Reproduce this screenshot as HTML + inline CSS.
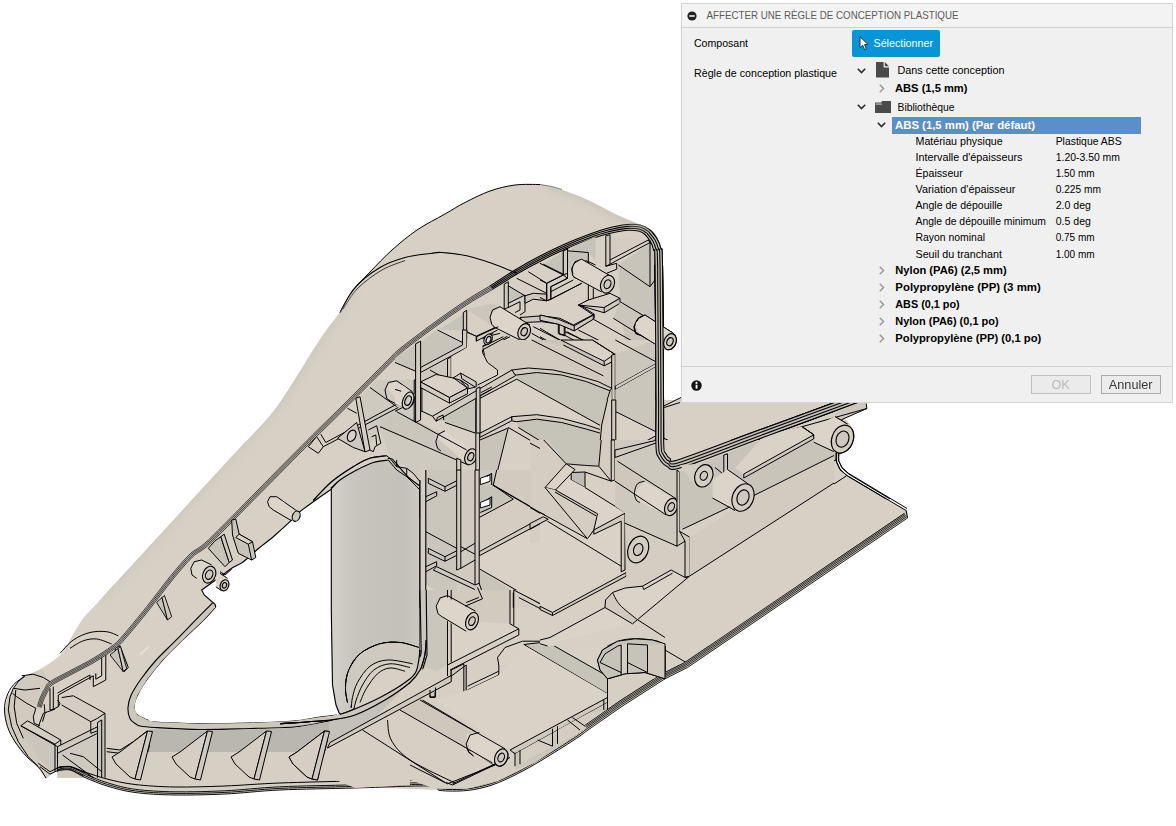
<!DOCTYPE html>
<html><head><meta charset="utf-8">
<style>
html,body{margin:0;padding:0;background:#fff;}
body{width:1176px;height:826px;overflow:hidden;position:relative;font-family:"Liberation Sans",sans-serif;font-size:11px;color:#000;}
#model{position:absolute;left:0;top:0;width:1176px;height:826px;}
#dlg{position:absolute;left:681px;top:3px;width:492px;height:400px;background:#f0f0f0;border:1px solid #d4d4d4;box-sizing:border-box;}
#ttl{position:absolute;left:0;top:0;width:490px;height:23px;border-bottom:1px solid #cfcfcf;background:#f3f3f3;}
.t{position:absolute;white-space:nowrap;line-height:14px;height:14px;font-size:11px;text-align:justify;text-align-last:justify;}
.b{font-weight:bold;}
#sel{position:absolute;left:169.5px;top:25.5px;width:88px;height:27px;background:#0696d7;border-radius:2px;}
#hl{position:absolute;left:210px;top:113px;width:249px;height:17px;background:#5b8fc9;}
#sep{position:absolute;left:0;top:362px;width:490px;height:1px;background:#cfcfcf;}
.btn{position:absolute;top:371px;width:58px;height:17px;border:1px solid #a9a9a9;background:#ebebeb;font-size:12px;text-align:center;line-height:17px;color:#3a3a3a;}
.btn span{display:inline-block;transform:scaleX(1.06);position:relative;top:1px;}
svg.i{position:absolute;overflow:visible}
#txt{position:absolute;left:0;top:0;font-family:"Liberation Sans",sans-serif;font-size:11px;fill:#000;}
#txt .b{font-weight:bold;}
</style></head><body>
<svg id="model" viewBox="0 0 1176 826">
<defs>
<linearGradient id="gcyl" x1="331" y1="0" x2="420" y2="0" gradientUnits="userSpaceOnUse">
<stop offset="0" stop-color="#d3d1c7"/><stop offset="0.3" stop-color="#c7c5bb"/><stop offset="0.8" stop-color="#c4c2b8"/><stop offset="1" stop-color="#cac8be"/>
</linearGradient>
</defs>
<path d="M46.0 779.0 C44.5 777.0 40.5 771.0 37.0 767.0 C33.5 763.0 29.2 760.0 25.0 755.0 C20.8 750.0 15.2 742.8 12.0 737.0 C8.8 731.2 6.6 724.3 5.5 720.0 C4.4 715.7 5.2 714.3 5.5 711.0 C5.8 707.7 6.1 704.0 7.5 700.0 C8.9 696.0 10.8 691.0 14.0 687.0 C17.2 683.0 22.3 679.2 27.0 676.0 C31.7 672.8 36.8 671.2 42.0 668.0 C47.2 664.8 53.8 660.8 58.0 657.0 C62.2 653.2 63.0 651.2 67.0 645.0 C71.0 638.8 76.5 627.5 82.0 620.0 C87.5 612.5 85.8 615.5 100.0 600.0 C114.2 584.5 144.5 551.5 167.0 527.0 C189.5 502.5 217.5 472.0 235.0 453.0 C252.5 434.0 261.7 425.8 272.0 413.0 C282.3 400.2 290.7 385.7 297.0 376.0 C303.3 366.3 305.3 362.3 310.0 355.0 C314.7 347.7 320.0 339.2 325.0 332.0 C330.0 324.8 335.5 318.7 340.0 312.0 C344.5 305.3 347.0 298.7 352.0 292.0 C357.0 285.3 363.3 279.0 370.0 272.0 C376.7 265.0 384.2 257.0 392.0 250.0 C399.8 243.0 408.2 236.0 417.0 230.0 C425.8 224.0 437.0 218.6 445.0 214.0 C453.0 209.4 457.5 206.3 465.0 202.5 C472.5 198.7 481.7 193.9 490.0 191.0 C498.3 188.1 506.7 186.1 515.0 185.0 C523.3 183.9 531.7 183.5 540.0 184.5 C548.3 185.5 556.7 188.2 565.0 191.0 C573.3 193.8 581.7 197.2 590.0 201.0 C598.3 204.8 607.5 210.4 615.0 214.0 C622.5 217.6 629.7 220.2 635.0 222.5 C640.3 224.8 643.5 225.4 647.0 227.5 C650.5 229.6 653.7 231.2 656.0 235.0 C658.3 238.8 659.9 243.0 661.0 250.0 C662.1 257.0 662.1 263.2 662.5 277.0 C662.9 290.8 663.3 323.7 663.5 333.0 L672.0 333.0 L677.0 341.0 L672.0 350.0 L663.5 350.0 L663.8 406.0 L681.0 397.5 L681.0 380.0 L880.0 380.0 L866.0 402.0 L867.0 408.5 L845.0 418.5 C846.0 419.8 849.6 422.9 851.0 426.0 C852.4 429.1 853.7 433.5 853.5 437.0 C853.3 440.5 851.8 444.3 850.0 447.0 C848.2 449.7 845.0 451.5 843.0 453.0 C841.0 454.5 838.8 455.5 838.0 456.0 C838.0 457.5 837.5 462.6 838.0 465.0 C838.5 467.4 839.6 468.8 841.0 470.5 C842.4 472.2 845.6 474.7 846.5 475.5 L907.0 510.5 L907.5 518.0 L688.0 667.5 C683.8 669.6 673.9 673.6 663.0 680.0 C652.1 686.4 635.0 697.7 622.5 706.0 C610.0 714.3 596.1 724.3 588.0 730.0 C579.9 735.7 581.7 735.0 574.0 740.0 C566.3 745.0 551.5 754.3 542.0 760.0 C532.5 765.7 525.3 769.8 517.0 774.0 C508.7 778.2 500.3 782.2 492.0 785.0 C483.7 787.8 475.7 789.6 467.0 790.5 C458.3 791.4 444.5 790.5 440.0 790.5 L430.0 786.0 C417.5 786.3 380.0 787.3 355.0 788.0 C330.0 788.7 301.7 789.0 280.0 790.0 C258.3 791.0 242.5 793.2 225.0 794.0 C207.5 794.8 190.0 795.2 175.0 795.0 C160.0 794.8 146.3 794.0 135.0 792.5 C123.7 791.0 115.3 788.5 107.0 786.0 C98.7 783.5 91.2 780.2 85.0 777.5 C78.8 774.8 74.7 771.1 70.0 770.0 C65.3 768.9 61.0 769.5 57.0 771.0 C53.0 772.5 47.8 777.7 46.0 779.0 Z" fill="#d7d1c5"/>
<path d="M331.3 489.0 C328.2 491.1 318.2 497.9 313.0 501.7 C307.8 505.5 303.8 508.4 300.0 511.7 C296.2 515.0 294.5 517.5 290.0 521.7 C285.5 525.9 278.6 532.0 273.0 536.7 C267.4 541.4 261.7 546.0 256.7 550.0 C251.7 554.0 247.2 558.0 243.0 561.0 C238.8 564.0 234.7 566.2 231.7 568.3 C228.7 570.3 230.0 569.7 225.0 573.3 C220.0 576.9 205.6 587.2 201.7 590.0 L204.0 595.0 L215.0 604.0 L215.6 607.0 C213.5 609.3 208.7 614.9 203.0 620.6 C197.3 626.3 188.0 634.7 181.2 641.2 C174.5 647.8 168.1 653.8 162.5 660.0 C156.9 666.2 151.7 672.9 147.5 678.8 C143.3 684.6 139.8 690.2 137.5 695.0 C135.2 699.8 133.8 704.2 133.8 707.5 C133.8 710.8 135.2 712.9 137.5 715.0 C139.8 717.1 144.6 718.8 147.5 720.0 C150.4 721.2 146.2 721.4 155.0 722.0 C163.8 722.6 184.2 723.5 200.0 723.7 C215.8 723.9 234.3 723.5 250.0 723.0 C265.7 722.5 282.8 721.9 294.0 721.0 C305.2 720.1 309.8 718.5 317.0 717.5 C324.2 716.5 333.2 715.4 337.0 715.0 C340.8 714.6 339.5 715.0 340.0 715.0 C339.3 713.3 337.2 710.0 336.0 705.0 C334.8 700.0 333.3 700.8 332.5 685.0 C331.7 669.2 331.5 632.5 331.3 610.0 C331.1 587.5 331.3 570.2 331.3 550.0 C331.3 529.8 331.3 499.2 331.3 489.0 Z" fill="#fff"/>
<path d="M13.3 688.3 L25.0 675.8 L41.7 669.2 L50.0 681.7 L45.0 688.3 L39.2 705.0 L33.3 710.0 L33.3 723.3 L20.0 725.0 L21.7 733.3 L40.0 760.0 L38.3 766.7 L26.7 756.7 L15.0 741.7 L7.5 726.7 L4.7 710.0 L7.5 696.7 Z" fill="#d0cabf"/>
<path d="M61.7 697.5 L73.3 695.8 L105.0 713.3 L105.0 777.7 L57.5 777.7 L57.5 746.7 L20.8 725.8 L27.5 720.8 L38.3 726.7 L43.3 713.3 L55.0 709.2 L58.3 706.7 Z" fill="#d3cdc2"/>
<path d="M97.5 722.5 L105.0 716.7 L105.0 777.7 L97.5 777.7 Z" fill="#c6c4b9"/>
<path d="M20.8 725.8 L55.0 744.2 L57.5 746.7 L57.5 771.7 L50.0 770.0 L40.0 760.0 L21.7 733.3 Z" fill="#cac6bb"/>
<path d="M57.5 746.7 L97.5 726.7 L97.5 777.7 L57.5 777.7 Z" fill="#cecabf"/>
<path d="M106.7 748.3 L120.0 750.0 L133.3 741.7 L150.0 730.8 L195.5 733.3 L195.5 755.0 L183.3 753.3 L175.0 756.7 L171.7 761.7 L195.5 777.7 L106.7 777.7 Z" fill="#cfc9be"/>
<path d="M150.0 730.8 L195.5 733.3 L195.5 746.7 L183.3 753.3 L146.7 751.7 L143.3 748.3 Z" fill="#b9b7ad"/>
<path d="M25.0 675.8 L18.3 681.7 L13.3 688.3 L10.0 696.7 L8.3 710.0 L11.7 726.7 L18.3 741.7 L28.3 756.7 L38.3 766.7" fill="none" stroke="#000" stroke-width="1.00"/>
<path d="M13.3 688.3 L25.0 690.0 L40.0 688.3" fill="none" stroke="#000" stroke-width="1.00"/>
<path d="M21.7 675.8 L33.3 674.2 L43.3 677.5 L50.0 681.7" fill="none" stroke="#000" stroke-width="1.00"/>
<path d="M15.8 690.0 L14.2 706.7 L16.7 723.3 L23.3 738.3" fill="none" stroke="#000" stroke-width="1.00"/>
<path d="M12.5 693.3 L16.7 696.7 L26.7 703.3 L35.8 708.3" fill="none" stroke="#000" stroke-width="1.00"/>
<path d="M35.8 708.3 L33.3 716.7 L34.2 723.3 L40.0 725.8" fill="none" stroke="#000" stroke-width="1.00"/>
<path d="M44.2 704.2 L45.0 713.3 L42.5 721.7" fill="none" stroke="#000" stroke-width="1.00"/>
<path d="M53.3 686.7 L53.3 709.2 L58.3 706.7 L58.3 695.0 L93.3 675.8 L93.3 686.7 L105.8 680.0 L105.8 655.0" fill="none" stroke="#000" stroke-width="1.00"/>
<path d="M57.5 693.0 L90.0 675.0 L90.0 680.0" fill="none" stroke="#000" stroke-width="1.00"/>
<path d="M101.7 656.7 L101.7 675.8 L95.8 679.2 L95.8 673.3" fill="none" stroke="#000" stroke-width="1.00"/>
<path d="M50.0 688.3 L50.0 710.0 L53.3 709.2" fill="none" stroke="#000" stroke-width="1.00"/>
<path d="M58.3 706.7 L60.0 703.3 L57.5 700.0" fill="none" stroke="#000" stroke-width="1.00"/>
<path d="M61.7 697.5 L73.3 695.8 L105.0 713.3 L105.0 777.7" fill="none" stroke="#000" stroke-width="1.00"/>
<path d="M61.7 705.0 L90.8 721.7 L97.5 718.3 L105.0 713.3" fill="none" stroke="#000" stroke-width="1.00"/>
<path d="M90.8 721.7 L90.8 733.3 L97.5 730.8 L97.5 722.5 L101.7 720.0 L101.7 777.7" fill="none" stroke="#000" stroke-width="1.00"/>
<path d="M97.5 730.8 L97.5 777.7" fill="none" stroke="#000" stroke-width="1.00"/>
<path d="M20.8 725.8 L27.5 720.8 L60.8 740.0 L60.8 745.0 L57.5 746.7 L20.8 725.8" fill="none" stroke="#000" stroke-width="1.00"/>
<path d="M57.5 746.7 L57.5 771.7" fill="none" stroke="#000" stroke-width="1.00"/>
<path d="M60.8 745.0 L97.5 726.7" fill="none" stroke="#000" stroke-width="1.00"/>
<path d="M57.5 753.3 L97.5 733.3" fill="none" stroke="#000" stroke-width="1.00"/>
<path d="M38.3 726.7 L43.3 713.3 L55.0 709.2" fill="none" stroke="#000" stroke-width="1.00"/>
<path d="M60.8 740.0 L55.0 744.2 L20.8 725.8" fill="none" stroke="#000" stroke-width="1.00"/>
<path d="M55.0 744.2 L55.0 771.7" fill="none" stroke="#000" stroke-width="1.00"/>
<path d="M62.5 755.0 L93.3 777.7" fill="none" stroke="#000" stroke-width="1.00"/>
<path d="M70.0 753.3 L83.3 756.7 L101.7 771.7" fill="none" stroke="#000" stroke-width="1.00"/>
<path d="M38.3 763.3 L50.0 771.7 L60.0 766.7 L70.0 766.7 L86.7 773.3 L93.3 777.7" fill="none" stroke="#000" stroke-width="1.00"/>
<path d="M40.0 766.7 L50.0 774.2 L60.0 769.2 L70.0 769.2 L83.3 775.8" fill="none" stroke="#000" stroke-width="1.00"/>
<path d="M215.6 607.0 C213.5 609.3 208.7 614.9 203.0 620.6 C197.3 626.3 188.0 634.7 181.2 641.2 C174.5 647.8 168.1 653.8 162.5 660.0 C156.9 666.2 151.7 672.9 147.5 678.8 C143.3 684.6 139.8 690.2 137.5 695.0 C135.2 699.8 133.8 704.2 133.8 707.5 C133.8 710.8 135.2 712.9 137.5 715.0 C139.8 717.1 144.6 718.8 147.5 720.0 C150.4 721.2 146.2 721.4 155.0 722.0 C163.8 722.6 184.2 723.5 200.0 723.7 C215.8 723.9 234.3 723.5 250.0 723.0 C265.7 722.5 282.8 721.9 294.0 721.0 C305.2 720.1 309.8 718.5 317.0 717.5 C324.2 716.5 333.7 715.4 337.0 715.0" fill="none" stroke="#000" stroke-width="1.12"/>
<path d="M212.5 603.0 L195.0 620.6 L175.0 641.2 L156.2 660.0 L141.2 678.8 L131.2 695.0 L128.0 707.5 L130.0 718.8 L136.0 724.0 L140.0 726.0 L155.0 727.5 L200.0 729.5 L250.0 728.5 L294.0 727.0 L317.0 723.5 L337.0 719.0 L337.0 715.0 L317.0 717.5 L294.0 721.0 L250.0 723.0 L200.0 723.7 L155.0 722.0 L147.5 720.0 L137.5 715.0 L133.8 707.5 L137.5 695.0 L147.5 678.8 L162.5 660.0 L181.2 641.2 L203.0 620.6 L215.6 607.0 Z" fill="#ccc7bc"/>
<path d="M212.5 603.0 C209.6 605.9 201.2 614.2 195.0 620.6 C188.8 627.0 181.5 634.7 175.0 641.2 C168.5 647.8 161.9 653.8 156.2 660.0 C150.6 666.2 145.4 672.9 141.2 678.8 C137.1 684.6 133.5 690.2 131.2 695.0 C129.0 699.8 128.2 703.5 128.0 707.5 C127.8 711.5 128.7 716.0 130.0 718.8 C131.3 721.5 134.3 722.8 136.0 724.0 C137.7 725.2 136.8 725.4 140.0 726.0 C143.2 726.6 145.0 726.9 155.0 727.5 C165.0 728.1 184.2 729.3 200.0 729.5 C215.8 729.7 234.3 728.9 250.0 728.5 C265.7 728.1 282.8 727.8 294.0 727.0 C305.2 726.2 309.8 724.8 317.0 723.5 C324.2 722.2 333.7 719.8 337.0 719.0" fill="none" stroke="#000" stroke-width="1.12"/>
<path d="M150.0 730.8 L136.7 777.7" fill="none" stroke="#000" stroke-width="1.00"/>
<path d="M153.3 731.3 L140.8 777.7" fill="none" stroke="#000" stroke-width="1.00"/>
<path d="M146.7 730.8 L133.3 777.7" fill="none" stroke="#000" stroke-width="1.00"/>
<path d="M106.7 748.3 L120.0 750.0 L133.3 741.7 L146.7 731.3" fill="none" stroke="#000" stroke-width="1.00"/>
<path d="M106.7 751.7 L120.0 753.3 L113.3 756.7 L116.7 766.7 L133.3 777.7" fill="none" stroke="#000" stroke-width="1.00"/>
<path d="M195.5 755.0 L183.3 753.3 L175.0 756.7 L171.7 761.7 L176.7 768.3 L195.5 777.7" fill="none" stroke="#000" stroke-width="1.00"/>
<path d="M115.0 648.3 L120.0 645.8 L128.3 667.5 L124.2 671.7 L116.7 658.3 Z" fill="#c6c4b9" stroke="#000" stroke-width="1.00"/>
<path d="M120.0 645.8 L124.2 671.7" fill="none" stroke="#000" stroke-width="0.88"/>
<path d="M150.0 729.0 L200.0 730.5 L250.0 729.5 L294.0 728.0 L337.0 720.0 L360.0 708.0 L372.0 712.0 L345.0 730.0 L330.0 752.0 L150.0 752.0 Z" fill="#bab8ae"/>
<path d="M107.0 755.0 L150.0 752.0 L330.0 752.0 L350.0 735.0 L420.0 700.0 L470.0 740.0 L440.0 790.0 L355.0 787.0 L280.0 789.0 L225.0 793.0 L175.0 794.0 L135.0 791.0 L107.0 785.0 Z" fill="#d5cfc4"/>
<path d="M112.0 757.0 L120.0 752.0 L147.5 731.0 L135.0 779.0 L130.0 777.0 L116.0 764.0 Z" fill="#d4cec3" stroke="#000" stroke-width="1.00"/>
<path d="M147.5 731.0 L152.5 731.5 L140.5 780.0 L135.0 779.0 Z" fill="#cec9be" stroke="#000" stroke-width="1.00"/>
<path d="M172.0 757.0 L180.0 752.0 L207.5 731.0 L195.0 779.0 L190.0 777.0 L176.0 764.0 Z" fill="#d4cec3" stroke="#000" stroke-width="1.00"/>
<path d="M207.5 731.0 L212.5 731.5 L200.5 780.0 L195.0 779.0 Z" fill="#cec9be" stroke="#000" stroke-width="1.00"/>
<path d="M231.0 757.0 L239.0 752.0 L266.5 731.0 L254.0 779.0 L249.0 777.0 L235.0 764.0 Z" fill="#d4cec3" stroke="#000" stroke-width="1.00"/>
<path d="M266.5 731.0 L271.5 731.5 L259.5 780.0 L254.0 779.0 Z" fill="#cec9be" stroke="#000" stroke-width="1.00"/>
<path d="M289.0 757.0 L297.0 752.0 L324.5 731.0 L312.0 779.0 L307.0 777.0 L293.0 764.0 Z" fill="#d4cec3" stroke="#000" stroke-width="1.00"/>
<path d="M324.5 731.0 L329.5 731.5 L317.5 780.0 L312.0 779.0 Z" fill="#cec9be" stroke="#000" stroke-width="1.00"/>
<path d="M57.0 771.0 C59.2 770.8 65.3 768.9 70.0 770.0 C74.7 771.1 78.8 774.8 85.0 777.5 C91.2 780.2 98.7 783.5 107.0 786.0 C115.3 788.5 123.7 791.0 135.0 792.5 C146.3 794.0 160.0 794.8 175.0 795.0 C190.0 795.2 207.5 794.8 225.0 794.0 C242.5 793.2 258.3 791.0 280.0 790.0 C301.7 789.0 330.0 788.7 355.0 788.0 C380.0 787.3 415.8 785.6 430.0 786.0 C444.2 786.4 433.8 789.8 440.0 790.5 C446.2 791.2 458.3 791.4 467.0 790.5 C475.7 789.6 483.7 787.8 492.0 785.0 C500.3 782.2 508.7 778.2 517.0 774.0 C525.3 769.8 532.5 765.7 542.0 760.0 C551.5 754.3 566.3 745.0 574.0 740.0 C581.7 735.0 585.7 731.7 588.0 730.0" fill="none" stroke="#111" stroke-width="1.00"/>
<path d="M56.9 769.4 C59.1 769.2 65.6 767.3 70.4 768.4 C75.2 769.5 79.5 773.4 85.6 776.0 C91.8 778.7 99.2 782.0 107.5 784.5 C115.7 786.9 123.9 789.4 135.2 790.9 C146.5 792.4 160.1 793.2 175.0 793.4 C190.0 793.6 207.4 793.2 224.9 792.4 C242.4 791.6 258.3 789.4 279.9 788.4 C301.6 787.4 329.9 787.1 355.0 786.4 C380.0 785.7 415.8 784.0 430.0 784.4 C444.3 784.8 434.1 788.2 440.2 788.9 C446.3 789.7 458.3 789.8 466.8 788.9 C475.4 788.0 483.3 786.2 491.5 783.5 C499.7 780.8 508.0 776.7 516.3 772.6 C524.6 768.4 531.7 764.3 541.2 758.6 C550.7 753.0 565.5 743.6 573.1 738.7 C580.8 733.7 584.7 730.4 587.1 728.7" fill="none" stroke="#111" stroke-width="1.00"/>
<path d="M56.8 767.8 C59.1 767.7 65.8 765.8 70.7 766.9 C75.6 768.0 80.1 771.9 86.3 774.6 C92.5 777.2 99.7 780.5 107.9 782.9 C116.1 785.4 124.2 787.9 135.4 789.3 C146.6 790.8 160.1 791.6 175.1 791.8 C190.0 792.0 207.4 791.6 224.8 790.8 C242.3 790.0 258.2 787.8 279.9 786.8 C301.5 785.8 329.9 785.5 354.9 784.8 C380.0 784.1 415.8 782.4 430.1 782.8 C444.3 783.2 434.3 786.6 440.4 787.3 C446.5 788.1 458.2 788.2 466.7 787.3 C475.1 786.4 482.8 784.7 491.0 782.0 C499.1 779.3 507.3 775.3 515.6 771.1 C523.8 767.0 530.9 762.9 540.4 757.3 C549.8 751.6 564.6 742.3 572.3 737.3 C579.9 732.3 583.8 729.0 586.1 727.4" fill="none" stroke="#111" stroke-width="1.00"/>
<path d="M57.0 768.0 C59.2 767.8 65.3 765.8 70.0 766.5 C74.7 767.2 78.8 769.9 85.0 772.0 C91.2 774.1 98.7 776.9 107.0 779.0 C115.3 781.1 123.7 783.2 135.0 784.5 C146.3 785.8 160.0 786.8 175.0 787.0 C190.0 787.2 207.5 786.7 225.0 786.0 C242.5 785.3 258.3 783.8 280.0 783.0 C301.7 782.2 331.7 781.5 355.0 781.0 C378.3 780.5 409.2 780.2 420.0 780.0" fill="none" stroke="#000" stroke-width="1.00"/>
<path d="M60.0 653.3 C62.2 651.1 68.3 643.5 73.3 640.0 C78.3 636.5 84.4 633.9 90.0 632.5 C95.6 631.1 102.0 631.2 106.7 631.7 C111.4 632.2 116.4 635.1 118.3 635.8" fill="none" stroke="#000" stroke-width="1.00"/>
<path d="M70.0 648.3 C72.2 647.0 78.8 642.3 83.3 640.8 C87.8 639.2 92.0 638.5 96.7 639.0 C101.4 639.5 109.2 643.2 111.7 644.0" fill="none" stroke="#000" stroke-width="1.00"/>
<path d="M156.7 602.5 L162.0 597.5 L167.5 620.0 Z" fill="#c6c4b9" stroke="#000" stroke-width="0.88"/>
<path d="M162.0 597.5 L164.5 595.5 L171.7 616.7 L167.5 620.0 Z" fill="#cec9be" stroke="#000" stroke-width="0.88"/>
<path d="M110.0 655.0 L118.0 648.5 L123.3 671.7 Z" fill="#c6c4b9" stroke="#000" stroke-width="0.88"/>
<path d="M118.0 648.5 L120.5 646.5 L126.7 668.3 L123.3 671.7 Z" fill="#cec9be" stroke="#000" stroke-width="0.88"/>
<path d="M140.0 655.0 L149.0 646.0" fill="none" stroke="#eceae2" stroke-width="2.00" opacity="0.6"/>
<path d="M37.5 706.7 C37.9 705.3 38.8 701.4 40.0 698.3 C41.2 695.2 43.3 691.1 45.0 688.3 C46.7 685.5 45.8 684.6 50.0 681.7 C54.2 678.8 62.8 674.7 70.0 670.8 C77.2 666.9 86.1 662.6 93.3 658.3 C100.5 654.0 108.3 648.9 113.3 645.0 C118.3 641.1 117.7 641.4 123.3 635.0 C128.9 628.6 138.9 616.4 146.7 606.7 C154.5 597.0 162.8 585.5 170.0 576.7 C177.2 567.9 183.6 560.1 190.0 554.0 C196.4 547.9 197.0 550.7 208.3 540.0 C219.6 529.3 241.5 506.7 258.0 490.0 C274.5 473.3 293.8 453.7 307.5 440.0 C321.2 426.3 330.4 417.5 340.0 408.0 C349.6 398.5 356.7 391.3 365.0 383.0 C373.3 374.7 384.2 363.8 390.0 358.0 C395.8 352.2 392.8 354.3 400.0 348.5 C407.2 342.7 422.2 331.4 433.3 323.3 C444.4 315.2 457.2 306.2 466.7 300.0 C476.1 293.8 486.1 288.3 490.0 286.0 L492.2 289.7 C488.3 292.0 478.4 297.3 469.0 303.4 C459.5 309.6 446.7 318.4 435.6 326.5 C424.5 334.5 409.6 345.8 402.4 351.5 C395.3 357.3 398.5 355.1 392.7 360.8 C387.0 366.5 376.1 377.4 367.8 385.8 C359.4 394.1 352.3 401.3 342.7 410.8 C333.2 420.3 323.9 429.1 310.3 442.8 C296.6 456.4 277.3 476.1 260.8 492.7 C244.2 509.4 222.3 532.2 211.0 542.8 C199.6 553.5 199.0 550.8 192.7 556.8 C186.4 562.9 180.2 570.5 173.0 579.2 C165.9 587.9 157.5 599.4 149.7 609.1 C141.9 618.9 131.9 631.1 126.2 637.6 C120.6 644.1 120.8 644.1 115.7 648.1 C110.5 652.1 102.6 657.3 95.3 661.7 C88.0 666.0 79.0 670.4 71.9 674.2 C64.7 678.1 56.2 682.2 52.2 684.9 C48.3 687.6 49.8 687.8 48.3 690.3 C46.9 692.8 44.8 696.9 43.6 699.8 C42.4 702.7 41.6 706.5 41.2 707.8 Z" fill="#cac5ba"/>
<path d="M37.5 706.7 C37.9 705.3 38.8 701.4 40.0 698.3 C41.2 695.2 43.3 691.1 45.0 688.3 C46.7 685.5 45.8 684.6 50.0 681.7 C54.2 678.8 62.8 674.7 70.0 670.8 C77.2 666.9 86.1 662.6 93.3 658.3 C100.5 654.0 108.3 648.9 113.3 645.0 C118.3 641.1 117.7 641.4 123.3 635.0 C128.9 628.6 138.9 616.4 146.7 606.7 C154.5 597.0 162.8 585.5 170.0 576.7 C177.2 567.9 183.6 560.1 190.0 554.0 C196.4 547.9 197.0 550.7 208.3 540.0 C219.6 529.3 241.5 506.7 258.0 490.0 C274.5 473.3 293.8 453.7 307.5 440.0 C321.2 426.3 330.4 417.5 340.0 408.0 C349.6 398.5 356.7 391.3 365.0 383.0 C373.3 374.7 384.2 363.8 390.0 358.0 C395.8 352.2 392.8 354.3 400.0 348.5 C407.2 342.7 422.2 331.4 433.3 323.3 C444.4 315.2 457.2 306.2 466.7 300.0 C476.1 293.8 486.1 288.3 490.0 286.0" fill="none" stroke="#1a1a1a" stroke-width="0.78"/>
<path d="M38.7 707.1 C39.2 705.7 40.0 701.8 41.2 698.8 C42.4 695.8 44.5 691.6 46.1 689.0 C47.7 686.3 46.7 685.6 50.7 682.8 C54.8 679.9 63.4 675.8 70.6 671.9 C77.8 668.1 86.7 663.7 94.0 659.4 C101.2 655.1 109.0 650.0 114.1 646.0 C119.1 642.1 118.7 642.3 124.3 635.9 C129.9 629.4 139.9 617.2 147.7 607.5 C155.5 597.8 163.8 586.3 171.0 577.5 C178.2 568.8 184.5 561.0 190.9 554.9 C197.3 548.8 197.9 551.6 209.2 540.9 C220.5 530.3 242.4 507.6 258.9 490.9 C275.5 474.2 294.8 454.6 308.4 440.9 C322.1 427.3 331.3 418.4 340.9 408.9 C350.5 399.4 357.6 392.3 365.9 383.9 C374.3 375.6 385.1 364.7 390.9 358.9 C396.7 353.2 393.6 355.3 400.8 349.5 C408.0 343.8 423.0 332.4 434.1 324.4 C445.2 316.3 458.0 307.3 467.5 301.1 C476.9 295.0 486.9 289.5 490.7 287.2" fill="none" stroke="#1a1a1a" stroke-width="0.78"/>
<path d="M40.0 707.4 C40.4 706.1 41.2 702.2 42.4 699.3 C43.6 696.3 45.7 692.2 47.2 689.6 C48.7 687.1 47.5 686.6 51.5 683.8 C55.5 681.1 64.0 677.0 71.2 673.1 C78.4 669.2 87.4 664.9 94.6 660.5 C101.9 656.2 109.8 651.0 114.9 647.1 C120.0 643.1 119.6 643.2 125.3 636.7 C130.9 630.3 140.9 618.1 148.7 608.3 C156.5 598.6 164.8 587.1 172.0 578.4 C179.2 569.6 185.5 562.0 191.8 555.9 C198.1 549.8 198.7 552.6 210.1 541.9 C221.4 531.2 243.3 508.5 259.8 491.8 C276.4 475.2 295.7 455.5 309.3 441.8 C323.0 428.2 332.2 419.3 341.8 409.8 C351.4 400.3 358.5 393.2 366.8 384.8 C375.2 376.5 386.0 365.6 391.8 359.9 C397.6 354.1 394.5 356.3 401.6 350.5 C408.8 344.8 423.7 333.4 434.8 325.4 C445.9 317.4 458.8 308.4 468.2 302.3 C477.6 296.1 487.6 290.8 491.5 288.5" fill="none" stroke="#1a1a1a" stroke-width="0.78"/>
<path d="M41.2 707.8 C41.6 706.5 42.4 702.7 43.6 699.8 C44.8 696.9 46.9 692.8 48.3 690.3 C49.8 687.8 48.3 687.6 52.2 684.9 C56.2 682.2 64.7 678.1 71.9 674.2 C79.0 670.4 88.0 666.0 95.3 661.7 C102.6 657.3 110.5 652.1 115.7 648.1 C120.8 644.1 120.6 644.1 126.2 637.6 C131.9 631.1 141.9 618.9 149.7 609.1 C157.5 599.4 165.9 587.9 173.0 579.2 C180.2 570.5 186.4 562.9 192.7 556.8 C199.0 550.8 199.6 553.5 211.0 542.8 C222.3 532.2 244.2 509.4 260.8 492.7 C277.3 476.1 296.6 456.4 310.3 442.8 C323.9 429.1 333.2 420.3 342.7 410.8 C352.3 401.3 359.4 394.1 367.8 385.8 C376.1 377.4 387.0 366.5 392.7 360.8 C398.5 355.1 395.3 357.3 402.4 351.5 C409.6 345.8 424.5 334.5 435.6 326.5 C446.7 318.4 459.5 309.6 469.0 303.4 C478.4 297.3 488.3 292.0 492.2 289.7" fill="none" stroke="#1a1a1a" stroke-width="0.78"/>
<path d="M490.0 286.0 C494.2 283.3 506.7 275.0 515.0 270.0 C523.3 265.0 531.7 260.3 540.0 256.0 C548.3 251.7 556.7 247.7 565.0 244.0 C573.3 240.3 583.0 236.6 590.0 234.0 C597.0 231.4 600.6 230.1 606.7 228.5 C612.8 226.9 621.2 225.1 626.7 224.5 C632.2 223.9 636.1 224.1 640.0 225.0 C643.9 225.9 647.2 227.8 650.0 230.0 C652.8 232.2 654.9 235.2 656.7 238.3 C658.5 241.4 659.8 243.9 660.8 248.3 C661.8 252.8 662.0 239.7 662.5 265.0 C663.0 290.3 663.3 369.8 663.5 400.0 C663.7 430.2 663.4 437.2 663.8 446.0 C664.1 454.8 664.5 450.9 665.5 453.0 C666.5 455.1 667.6 457.5 670.0 458.5 C672.4 459.5 665.0 464.0 680.0 459.2 C695.0 454.4 729.0 441.1 760.0 429.8 C791.0 418.4 848.3 397.5 866.0 391.0 L868.7 398.3 C851.0 404.8 793.8 426.0 762.8 437.4 C731.8 448.9 698.6 462.4 682.6 467.2 C666.5 472.0 670.8 468.0 666.7 466.2 C662.6 464.5 660.0 460.0 658.2 456.7 C656.4 453.3 656.3 455.7 656.0 446.3 C655.6 436.9 656.2 430.2 656.1 400.1 C655.9 369.9 655.5 290.2 655.1 265.1 C654.7 240.1 654.3 253.8 653.6 249.9 C652.8 246.0 651.9 244.3 650.7 241.9 C649.4 239.4 647.9 237.0 645.9 235.2 C643.9 233.4 641.7 231.9 638.6 231.1 C635.5 230.3 632.4 229.9 627.3 230.3 C622.2 230.8 614.0 232.4 608.1 233.8 C602.1 235.2 598.6 236.3 591.8 238.8 C584.9 241.2 575.2 244.9 567.0 248.5 C558.7 252.0 550.4 255.9 542.2 260.2 C533.9 264.4 525.6 268.9 517.3 273.8 C509.0 278.8 496.5 287.0 492.3 289.6 Z" fill="#c4c1b6"/>
<path d="M490.0 286.0 C494.2 283.3 506.7 275.0 515.0 270.0 C523.3 265.0 531.7 260.3 540.0 256.0 C548.3 251.7 556.7 247.7 565.0 244.0 C573.3 240.3 583.0 236.6 590.0 234.0 C597.0 231.4 600.6 230.1 606.7 228.5 C612.8 226.9 621.2 225.1 626.7 224.5 C632.2 223.9 636.1 224.1 640.0 225.0 C643.9 225.9 647.2 227.8 650.0 230.0 C652.8 232.2 654.9 235.2 656.7 238.3 C658.5 241.4 659.8 243.9 660.8 248.3 C661.8 252.8 662.0 239.7 662.5 265.0 C663.0 290.3 663.3 369.8 663.5 400.0 C663.7 430.2 663.4 437.2 663.8 446.0 C664.1 454.8 664.5 450.9 665.5 453.0 C666.5 455.1 667.6 457.5 670.0 458.5 C672.4 459.5 665.0 464.0 680.0 459.2 C695.0 454.4 729.0 441.1 760.0 429.8 C791.0 418.4 848.3 397.5 866.0 391.0" fill="none" stroke="#000" stroke-width="1.06"/>
<path d="M490.8 287.2 C494.9 284.6 507.4 276.3 515.8 271.3 C524.1 266.3 532.4 261.7 540.7 257.4 C549.0 253.1 557.3 249.1 565.7 245.5 C574.0 241.9 583.7 238.1 590.6 235.6 C597.5 233.0 601.1 231.8 607.2 230.3 C613.2 228.7 621.5 227.0 626.9 226.4 C632.3 225.9 635.9 226.1 639.5 227.0 C643.1 227.9 646.1 229.7 648.6 231.7 C651.2 233.8 653.1 236.6 654.7 239.5 C656.3 242.3 657.5 244.6 658.4 248.8 C659.3 253.1 659.6 239.8 660.0 265.0 C660.5 290.2 660.8 369.8 661.0 400.0 C661.2 430.2 660.8 437.1 661.2 446.1 C661.5 455.1 661.8 451.7 663.1 454.2 C664.3 456.7 665.9 459.8 668.9 461.1 C671.9 462.3 665.5 466.7 680.9 461.9 C696.2 457.1 729.9 443.7 760.9 432.3 C791.9 420.9 849.2 399.9 866.9 393.4" fill="none" stroke="#000" stroke-width="1.06"/>
<path d="M491.5 288.4 C495.7 285.8 508.2 277.5 516.5 272.6 C524.9 267.6 533.1 263.0 541.4 258.8 C549.7 254.5 558.0 250.6 566.3 247.0 C574.6 243.4 584.3 239.7 591.2 237.2 C598.1 234.7 601.6 233.5 607.6 232.0 C613.6 230.6 621.9 228.9 627.1 228.4 C632.3 227.9 635.7 228.2 639.0 229.0 C642.4 229.9 645.0 231.5 647.2 233.5 C649.5 235.4 651.2 238.0 652.7 240.7 C654.1 243.3 655.2 245.3 656.0 249.3 C656.8 253.4 657.1 240.0 657.6 265.1 C658.0 290.2 658.4 369.8 658.6 400.0 C658.7 430.2 658.2 437.0 658.6 446.2 C658.9 455.4 659.1 452.5 660.6 455.4 C662.2 458.3 664.3 462.1 667.8 463.6 C671.3 465.2 666.0 469.3 681.7 464.5 C697.4 459.7 730.9 446.3 761.9 434.9 C792.9 423.4 850.1 402.4 867.8 395.9" fill="none" stroke="#000" stroke-width="1.06"/>
<path d="M492.3 289.6 C496.5 287.0 509.0 278.8 517.3 273.8 C525.6 268.9 533.9 264.4 542.2 260.2 C550.4 255.9 558.7 252.0 567.0 248.5 C575.2 244.9 584.9 241.2 591.8 238.8 C598.6 236.3 602.1 235.2 608.1 233.8 C614.0 232.4 622.2 230.8 627.3 230.3 C632.4 229.9 635.5 230.3 638.6 231.1 C641.7 231.9 643.9 233.4 645.9 235.2 C647.9 237.0 649.4 239.4 650.7 241.9 C651.9 244.3 652.8 246.0 653.6 249.9 C654.3 253.8 654.7 240.1 655.1 265.1 C655.5 290.2 655.9 369.9 656.1 400.1 C656.2 430.2 655.6 436.9 656.0 446.3 C656.3 455.7 656.4 453.3 658.2 456.7 C660.0 460.0 662.6 464.5 666.7 466.2 C670.8 468.0 666.5 472.0 682.6 467.2 C698.6 462.4 731.8 448.9 762.8 437.4 C793.8 426.0 851.0 404.8 868.7 398.3" fill="none" stroke="#000" stroke-width="1.06"/>
<path d="M331.3 489.0 L340.0 479.0 L352.5 469.0 L372.5 461.0 L390.0 458.5 L395.0 462.0 L408.0 476.0 L420.0 485.0 L420.0 650.0 L416.0 668.0 L405.0 683.0 L385.0 698.0 L360.0 710.0 L340.0 715.0 L336.0 705.0 L332.5 685.0 L331.3 610.0 Z" fill="url(#gcyl)"/>
<path d="M331.3 489.0 L331.3 610.0 L332.5 685.0 L336.0 705.0 L340.0 715.0" fill="none" stroke="#000" stroke-width="1.12"/>
<path d="M386.7 455.8 C383.9 456.2 375.6 456.5 370.0 458.3 C364.4 460.1 359.7 462.8 353.3 466.7 C346.9 470.6 338.4 476.1 331.7 481.7 C325.0 487.3 316.4 497.4 313.3 500.5" fill="none" stroke="#000" stroke-width="1.12"/>
<path d="M420.0 486.0 C418.0 484.5 412.2 481.0 408.0 477.0 C403.8 473.0 398.0 465.1 395.0 462.0 C392.0 458.9 393.8 458.7 390.0 458.5 C386.2 458.3 378.8 459.2 372.5 461.0 C366.2 462.8 357.9 466.0 352.5 469.0 C347.1 472.0 343.5 475.7 340.0 479.0 C336.5 482.3 332.8 487.3 331.3 489.0" fill="none" stroke="#000" stroke-width="1.12"/>
<path d="M420.0 485.0 L426.3 489.0 L426.3 652.0 L420.0 660.0 Z" fill="#d3cdc2"/>
<path d="M420.0 485.0 L420.0 650.0" fill="none" stroke="#000" stroke-width="1.12"/>
<path d="M426.3 489.0 L426.3 640.0" fill="none" stroke="#000" stroke-width="1.12"/>
<path d="M418.8 647.5 L400.0 642.5 L380.0 643.8 L360.0 653.8 L348.8 670.0 L345.5 687.5 L347.5 700.0 L355.0 710.0 L385.0 697.5 L410.0 680.0 L420.0 667.5 Z" fill="#cecac0"/>
<path d="M412.5 663.8 L387.5 660.0 L370.0 666.2 L357.5 682.5 L352.5 697.5 L355.0 710.0 L385.0 697.5 L410.0 680.0 L416.2 671.2 Z" fill="#d6d0c5"/>
<path d="M418.8 647.5 C415.6 646.7 406.5 643.1 400.0 642.5 C393.5 641.9 386.7 641.9 380.0 643.8 C373.3 645.6 365.2 649.4 360.0 653.8 C354.8 658.1 351.2 664.4 348.8 670.0 C346.3 675.6 345.7 682.1 345.5 687.5 C345.3 692.9 347.2 700.0 347.5 702.5" fill="none" stroke="#000" stroke-width="1.00"/>
<path d="M412.5 663.8 C408.3 663.1 394.6 659.6 387.5 660.0 C380.4 660.4 375.0 662.5 370.0 666.2 C365.0 670.0 360.4 677.3 357.5 682.5 C354.6 687.7 353.5 693.3 352.5 697.5 C351.5 701.7 351.5 705.8 351.2 707.5" fill="none" stroke="#000" stroke-width="1.00"/>
<path d="M410.0 667.5 C406.7 666.9 396.0 663.3 390.0 663.8 C384.0 664.2 378.3 666.5 373.8 670.0 C369.2 673.5 365.4 680.0 362.5 685.0 C359.6 690.0 357.7 695.8 356.2 700.0 C354.8 704.2 354.2 708.3 353.8 710.0" fill="none" stroke="#000" stroke-width="1.00"/>
<path d="M405.0 671.2 C402.5 670.7 394.6 667.6 390.0 668.0 C385.4 668.4 381.5 670.3 377.5 673.8 C373.5 677.2 369.2 684.0 366.2 688.8 C363.3 693.5 361.0 700.2 360.0 702.5" fill="none" stroke="#000" stroke-width="1.00"/>
<path d="M425.0 653.8 L420.0 670.0 L410.0 682.5 L385.0 700.0 L355.0 715.0 L330.0 720.0 L317.5 719.2 L337.5 715.0 L352.5 710.0 L380.0 697.5 L405.0 682.5 L416.2 671.2 L420.0 657.5 Z" fill="#cdc7bc"/>
<path d="M426.2 640.0 C426.0 642.3 426.0 648.8 425.0 653.8 C424.0 658.8 422.5 665.2 420.0 670.0 C417.5 674.8 415.8 677.5 410.0 682.5 C404.2 687.5 394.2 694.6 385.0 700.0 C375.8 705.4 364.2 711.7 355.0 715.0 C345.8 718.3 342.5 718.5 330.0 720.0 C317.5 721.5 288.3 723.1 280.0 723.8" fill="none" stroke="#000" stroke-width="1.12"/>
<path d="M420.0 650.0 C419.4 653.5 418.8 665.8 416.2 671.2 C413.8 676.7 411.0 678.1 405.0 682.5 C399.0 686.9 388.8 692.9 380.0 697.5 C371.2 702.1 359.2 707.2 352.5 710.0 C345.8 712.8 342.1 713.8 340.0 714.5" fill="none" stroke="#000" stroke-width="1.12"/>
<path d="M360.0 396.7 L376.7 380.0 L416.7 380.0 L416.7 420.0 L456.7 443.3 L456.7 480.0 L446.7 490.0 L428.3 480.0 L420.0 481.7 L406.7 466.7 L390.0 456.7 L380.0 430.0 L365.0 451.7 Z" fill="#cecabf"/>
<path d="M386.7 455.8 L370.0 458.3 L353.3 466.7 L331.7 481.7 L313.3 500.0 L330.8 488.3 L340.0 480.0 L356.7 470.0 L373.3 462.5 L388.3 460.0 Z" fill="#d6d0c5"/>
<path d="M386.7 455.8 L390.0 458.3 L396.7 466.7 L406.7 468.3 L413.3 473.3 L420.0 481.7" fill="none" stroke="#000" stroke-width="1.00"/>
<path d="M388.3 460.0 L396.7 470.0 L406.7 476.7 L416.7 486.7 L420.0 490.0" fill="none" stroke="#000" stroke-width="1.00"/>
<path d="M396.7 460.0 L396.7 466.7" fill="none" stroke="#000" stroke-width="1.00"/>
<path d="M406.7 468.3 L406.7 476.7" fill="none" stroke="#000" stroke-width="1.00"/>
<path d="M425.8 483.3 L425.8 517.7" fill="none" stroke="#000" stroke-width="1.12"/>
<path d="M420.0 481.7 L420.0 517.7" fill="none" stroke="#000" stroke-width="1.12"/>
<path d="M396.7 411.7 L470.8 448.3 L468.3 465.0 L380.0 426.7 L383.3 419.2 Z" fill="#cac6bb"/>
<path d="M436.7 437.5 L445.0 430.8 L470.8 448.3 L468.3 465.0 Z" fill="#dbd5ca"/>
<path d="M396.7 411.7 L466.7 450.0" fill="none" stroke="#000" stroke-width="1.00"/>
<path d="M380.0 426.7 L468.3 465.0" fill="none" stroke="#000" stroke-width="1.00"/>
<path d="M370.0 387.5 L396.7 406.7" fill="none" stroke="#000" stroke-width="1.00"/>
<path d="M445.0 430.8 L438.3 434.2 L435.8 441.7 L437.5 448.3 L440.8 450.8" fill="none" stroke="#000" stroke-width="1.00"/>
<ellipse cx="470.8" cy="456.7" rx="5.7" ry="8.3" transform="rotate(22 470.8 456.7)" fill="#d3cdc2" stroke="#000" stroke-width="1.12"/>
<ellipse cx="470.8" cy="456.7" rx="2.8" ry="4.2" transform="rotate(22 470.8 456.7)" fill="#cec9be" stroke="#000" stroke-width="1.12"/>
<path d="M385.8 386.7 L395.0 380.8 L413.3 392.5 L405.0 408.3 Z" fill="#dbd5ca"/>
<path d="M396.7 380.8 L388.3 382.5 L385.0 390.0 L386.7 398.3 L390.0 400.8" fill="none" stroke="#000" stroke-width="1.00"/>
<path d="M396.7 380.8 L412.5 391.7" fill="none" stroke="#000" stroke-width="1.00"/>
<path d="M390.0 400.8 L405.0 408.3" fill="none" stroke="#000" stroke-width="1.00"/>
<ellipse cx="408.3" cy="400.0" rx="5.7" ry="8.3" transform="rotate(22 408.3 400.0)" fill="#d3cdc2" stroke="#000" stroke-width="1.12"/>
<ellipse cx="408.3" cy="400.0" rx="2.8" ry="4.2" transform="rotate(22 408.3 400.0)" fill="#cec9be" stroke="#000" stroke-width="1.12"/>
<path d="M414.2 380.0 L420.0 380.0 L420.0 419.2 L414.2 421.7 Z" fill="#cfc9be" stroke="#000" stroke-width="1.00"/>
<path d="M398.3 407.5 L323.3 446.7 L316.7 436.7" fill="none" stroke="#000" stroke-width="1.00"/>
<path d="M396.7 404.2 L325.8 442.5 L320.8 434.2" fill="none" stroke="#000" stroke-width="1.00"/>
<path d="M323.3 446.7 L318.3 453.3 L308.3 446.7 L315.8 437.5" fill="none" stroke="#000" stroke-width="1.00"/>
<path d="M337.5 438.3 L356.7 422.5 L365.0 451.7 L353.3 447.5 Z" fill="#cec9be" stroke="#000" stroke-width="1.00"/>
<ellipse cx="351.7" cy="435.8" rx="4.0" ry="6.0" transform="rotate(25 351.7 435.8)" fill="#d6d0c5" stroke="#000" stroke-width="1.12"/>
<path d="M355.8 398.3 L360.0 396.7 L370.0 450.0 L365.0 452.0 Z" fill="#d3cdc2" stroke="#000" stroke-width="1.00"/>
<path d="M368.3 430.0 L376.7 425.8 L380.8 443.3 L375.0 446.7 L373.3 451.7 L370.0 450.0" fill="none" stroke="#000" stroke-width="1.00"/>
<path d="M371.7 436.7 L375.8 435.0 L376.7 445.0" fill="none" stroke="#000" stroke-width="1.00"/>
<path d="M347.5 408.3 L356.7 413.3" fill="none" stroke="#000" stroke-width="1.00"/>
<path d="M428.3 479.2 L445.0 487.5 L456.7 481.7" fill="none" stroke="#000" stroke-width="1.00"/>
<path d="M428.3 479.2 L428.3 483.3 L445.0 491.3 L445.0 487.5" fill="none" stroke="#000" stroke-width="1.00"/>
<path d="M445.0 491.3 L456.7 485.0" fill="none" stroke="#000" stroke-width="1.00"/>
<path d="M425.8 496.7 L436.7 491.7 L436.7 495.0 L425.8 501.7" fill="none" stroke="#000" stroke-width="1.00"/>
<path d="M456.7 458.3 L460.8 460.0 L460.8 517.7 L456.7 517.7 Z" fill="#d3cdc2" stroke="#000" stroke-width="1.00"/>
<path d="M386.7 455.8 C383.9 456.2 375.6 456.5 370.0 458.3 C364.4 460.1 359.7 462.8 353.3 466.7 C346.9 470.6 338.3 476.1 331.7 481.7 C325.0 487.3 316.4 497.2 313.3 500.3" fill="none" stroke="#000" stroke-width="1.12"/>
<path d="M388.3 460.0 C385.8 460.4 378.6 460.8 373.3 462.5 C368.1 464.2 362.2 467.1 356.7 470.0 C351.1 472.9 344.3 476.9 340.0 480.0 C335.7 483.1 332.4 486.9 330.8 488.3" fill="none" stroke="#000" stroke-width="1.12"/>
<path d="M340.0 312.5 C342.5 308.3 348.3 295.0 355.0 287.5 C361.7 280.0 371.7 272.5 380.0 267.5 C388.3 262.5 396.7 259.8 405.0 257.5 C413.3 255.2 423.9 254.3 430.0 253.5 C436.1 252.7 435.6 252.1 441.7 252.5 C447.8 252.9 458.4 254.0 466.7 255.8 C475.0 257.6 483.4 260.4 491.7 263.3 C500.0 266.2 512.5 271.6 516.7 273.3" fill="none" stroke="#000" stroke-width="1.12"/>
<path d="M343.0 309.0 C345.5 305.5 351.5 294.5 358.0 288.0 C364.5 281.5 374.2 274.6 382.0 270.0 C389.8 265.4 401.2 262.1 405.0 260.5" fill="none" stroke="#000" stroke-width="0.75"/>
<path d="M420.0 341.7 L463.3 314.2 L463.3 345.0 L438.3 333.3 Z" fill="#c6c4b9"/>
<path d="M508.3 285.8 L525.0 295.8 L508.3 304.2 Z" fill="#c6c4b9"/>
<path d="M543.3 264.2 L563.3 251.7 L563.3 274.2 L556.7 271.7 Z" fill="#c6c4b9"/>
<path d="M570.0 247.5 L595.5 236.7 L595.5 260.0 L588.3 252.5 L576.7 256.7 Z" fill="#c6c4b9"/>
<path d="M463.3 312.5 L466.7 310.3 L466.7 344.2 L463.3 345.8 Z" fill="#cfc9be" stroke="#000" stroke-width="1.00"/>
<path d="M463.3 345.8 L430.0 363.3" fill="none" stroke="#000" stroke-width="1.00"/>
<path d="M466.7 344.2 L466.7 348.3 L435.0 365.0" fill="none" stroke="#000" stroke-width="1.00"/>
<path d="M420.0 341.7 L420.0 362.7" fill="none" stroke="#000" stroke-width="1.00"/>
<path d="M415.8 344.2 L415.8 362.7" fill="none" stroke="#000" stroke-width="1.00"/>
<path d="M438.3 333.3 L463.3 345.8" fill="none" stroke="#000" stroke-width="1.00"/>
<path d="M504.2 284.2 L508.3 281.7 L508.3 307.5 L504.2 309.2 Z" fill="#cfc9be" stroke="#000" stroke-width="1.00"/>
<path d="M508.3 307.5 L520.0 301.7 L520.0 310.0 L515.0 312.5" fill="none" stroke="#000" stroke-width="1.00"/>
<path d="M504.2 309.2 L504.2 313.3" fill="none" stroke="#000" stroke-width="1.00"/>
<path d="M508.3 303.3 L525.0 295.0 L525.0 311.7 L520.0 315.0" fill="none" stroke="#000" stroke-width="1.00"/>
<path d="M508.3 285.8 L525.0 295.8" fill="none" stroke="#000" stroke-width="1.00"/>
<path d="M563.3 250.0 L567.5 248.0 L567.5 278.3 L563.3 275.0 Z" fill="#cfc9be" stroke="#000" stroke-width="1.00"/>
<path d="M563.3 275.0 L546.7 283.3 L546.7 300.8 L550.8 299.2 L550.8 286.7 L567.5 278.3" fill="none" stroke="#000" stroke-width="1.00"/>
<path d="M550.8 299.2 L581.7 283.3" fill="none" stroke="#000" stroke-width="1.00"/>
<path d="M550.8 291.7 L573.3 280.0" fill="none" stroke="#000" stroke-width="1.00"/>
<path d="M543.3 264.2 L563.3 274.2" fill="none" stroke="#000" stroke-width="1.00"/>
<path d="M516.7 278.3 L546.7 293.3" fill="none" stroke="#000" stroke-width="1.00"/>
<path d="M528.3 271.7 L546.7 283.3" fill="none" stroke="#000" stroke-width="1.00"/>
<path d="M525.0 295.8 L533.3 293.3 L546.7 294.2 L546.7 300.8 L533.3 299.2 L525.0 303.3 Z" fill="#cec9be" stroke="#000" stroke-width="1.00"/>
<path d="M520.0 317.5 L541.7 315.8 L560.0 318.3 L573.3 325.0 L574.2 330.8 L560.0 324.2 L541.7 321.7 L523.3 322.5 Z" fill="#cec9be" stroke="#000" stroke-width="1.00"/>
<path d="M573.3 325.0 L594.2 314.2 L594.2 318.3 L574.2 330.8" fill="none" stroke="#000" stroke-width="1.00"/>
<path d="M594.2 314.2 L580.0 305.0 L588.3 300.0" fill="none" stroke="#000" stroke-width="1.00"/>
<path d="M558.3 324.2 L558.3 333.3 L564.2 335.0 L564.2 326.7" fill="none" stroke="#000" stroke-width="1.00"/>
<path d="M466.7 309.2 L493.3 303.3 L530.0 325.0 L520.0 340.0 L493.3 326.7 Z" fill="#cac6bb"/>
<path d="M490.0 315.0 L500.0 306.7 L530.0 325.0 L520.0 340.0 L493.3 326.7 Z" fill="#dbd5ca"/>
<path d="M500.0 306.7 L530.0 325.0" fill="none" stroke="#000" stroke-width="1.00"/>
<path d="M493.3 326.7 L520.0 340.0" fill="none" stroke="#000" stroke-width="1.00"/>
<path d="M500.0 306.7 L492.5 310.0 L490.0 317.5 L491.7 324.2 L494.2 326.7" fill="none" stroke="#000" stroke-width="1.00"/>
<ellipse cx="524.2" cy="331.7" rx="6.0" ry="8.3" transform="rotate(22 524.2 331.7)" fill="#d3cdc2" stroke="#000" stroke-width="1.12"/>
<ellipse cx="524.2" cy="331.7" rx="3.0" ry="4.2" transform="rotate(22 524.2 331.7)" fill="#cec9be" stroke="#000" stroke-width="1.12"/>
<path d="M466.7 331.7 L476.7 336.7 L498.3 326.7" fill="none" stroke="#000" stroke-width="1.00"/>
<path d="M476.7 336.7 L476.7 341.7 L466.7 336.7" fill="none" stroke="#000" stroke-width="1.00"/>
<path d="M476.7 341.7 L493.3 333.3" fill="none" stroke="#000" stroke-width="1.00"/>
<path d="M483.3 350.0 L483.3 341.7 L490.0 335.8 L500.0 333.3" fill="none" stroke="#000" stroke-width="1.00"/>
<path d="M483.3 350.0 L510.0 336.7" fill="none" stroke="#000" stroke-width="1.00"/>
<path d="M481.7 351.7 L486.7 362.7" fill="none" stroke="#000" stroke-width="1.00"/>
<ellipse cx="488.3" cy="340.0" rx="2.3" ry="3.7" transform="rotate(25 488.3 340.0)" fill="#d6d0c5" stroke="#000" stroke-width="1.12"/>
<path d="M573.3 268.3 L579.2 260.8 L595.5 265.8 L595.5 288.3 Z" fill="#dbd5ca"/>
<path d="M583.3 259.2 L575.0 262.5 L571.7 270.0 L575.0 276.7" fill="none" stroke="#000" stroke-width="1.00"/>
<path d="M583.3 259.2 L595.5 265.0" fill="none" stroke="#000" stroke-width="1.00"/>
<path d="M575.0 276.7 L595.5 288.3" fill="none" stroke="#000" stroke-width="1.00"/>
<path d="M533.3 326.7 L595.5 358.3" fill="none" stroke="#000" stroke-width="1.00"/>
<path d="M531.7 333.3 L583.3 362.7" fill="none" stroke="#000" stroke-width="1.00"/>
<path d="M566.7 331.7 L595.5 346.7" fill="none" stroke="#000" stroke-width="1.00"/>
<path d="M564.2 335.0 L595.5 351.7" fill="none" stroke="#000" stroke-width="1.00"/>
<path d="M618.3 265.0 L650.0 243.3 L655.0 245.8 L656.7 352.7 L626.7 352.7 L620.0 303.3 L620.0 298.3 Z" fill="#c8c4b9"/>
<path d="M610.0 237.5 L646.7 240.0 L610.0 260.0 Z" fill="#d3cdc2"/>
<path d="M566.7 250.8 L588.3 252.5 L588.3 260.0 L575.0 261.7 L566.7 273.3 Z" fill="#c6c4b9"/>
<path d="M605.8 235.8 L610.0 234.7 L610.0 264.2 L605.8 266.3 Z" fill="#cfc9be" stroke="#000" stroke-width="1.00"/>
<path d="M610.0 260.0 L648.3 240.0 L650.0 242.5 L610.0 264.2" fill="none" stroke="#000" stroke-width="1.00"/>
<path d="M649.2 242.5 L655.0 245.8 L655.0 280.0 L650.0 286.7 L650.0 243.3" fill="none" stroke="#000" stroke-width="1.00"/>
<path d="M618.3 265.0 L650.0 286.7" fill="none" stroke="#000" stroke-width="1.00"/>
<path d="M605.8 266.3 L616.7 263.3 L616.7 269.2 L606.7 273.3" fill="none" stroke="#000" stroke-width="1.00"/>
<path d="M563.3 250.8 L567.5 249.2 L567.5 273.3 L563.3 275.0 Z" fill="#cfc9be" stroke="#000" stroke-width="1.00"/>
<path d="M563.3 275.0 L546.7 283.3 L546.7 300.8 L550.8 299.2 L550.8 286.7 L567.5 278.3" fill="none" stroke="#000" stroke-width="1.00"/>
<path d="M550.8 299.2 L581.7 283.3" fill="none" stroke="#000" stroke-width="1.00"/>
<path d="M546.7 283.3 L540.0 280.0" fill="none" stroke="#000" stroke-width="1.00"/>
<path d="M546.7 300.8 L540.0 297.5" fill="none" stroke="#000" stroke-width="1.00"/>
<path d="M567.5 250.8 L588.3 252.5 L588.3 260.0" fill="none" stroke="#000" stroke-width="1.00"/>
<path d="M540.0 263.3 L563.3 275.0" fill="none" stroke="#000" stroke-width="1.00"/>
<path d="M588.3 260.0 L588.3 301.7" fill="none" stroke="#000" stroke-width="1.00"/>
<path d="M593.3 288.3 L593.3 298.3" fill="none" stroke="#000" stroke-width="1.00"/>
<path d="M588.3 300.0 L610.0 293.3 L620.0 298.3 L604.2 307.5 L578.3 305.0 Z" fill="#d6d0c5" stroke="#000" stroke-width="1.00"/>
<path d="M604.2 307.5 L620.0 298.3 L620.0 303.3 L604.2 312.8 Z" fill="#cec9be" stroke="#000" stroke-width="1.00"/>
<path d="M578.3 305.0 L604.2 312.8" fill="none" stroke="#000" stroke-width="1.00"/>
<path d="M573.3 265.0 L581.7 259.2 L613.3 277.5 L601.7 292.5 L573.3 276.7 Z" fill="#dbd5ca"/>
<path d="M581.7 259.2 L611.7 276.7" fill="none" stroke="#000" stroke-width="1.00"/>
<path d="M573.3 276.7 L601.7 292.0" fill="none" stroke="#000" stroke-width="1.00"/>
<path d="M581.7 259.2 L575.0 261.7 L571.7 268.3 L572.5 275.0 L575.0 278.3" fill="none" stroke="#000" stroke-width="1.00"/>
<ellipse cx="607.5" cy="284.2" rx="6.7" ry="9.2" transform="rotate(22 607.5 284.2)" fill="#d3cdc2" stroke="#000" stroke-width="1.12"/>
<ellipse cx="607.5" cy="284.2" rx="3.3" ry="4.6" transform="rotate(22 607.5 284.2)" fill="#cec9be" stroke="#000" stroke-width="1.12"/>
<path d="M620.0 301.7 L673.3 333.3 L663.3 349.2 L613.3 318.3 Z" fill="#cac6bb"/>
<path d="M635.0 323.3 L645.0 315.0 L673.3 333.3 L663.3 349.2 L640.0 334.2 Z" fill="#dbd5ca"/>
<path d="M620.0 301.7 L673.3 333.3" fill="none" stroke="#000" stroke-width="1.00"/>
<path d="M613.3 318.3 L663.3 349.2" fill="none" stroke="#000" stroke-width="1.00"/>
<path d="M645.0 315.0 L638.3 318.3 L634.2 326.7 L635.8 333.3 L640.0 335.0" fill="none" stroke="#000" stroke-width="1.00"/>
<path d="M650.0 230.0 C651.1 231.4 654.9 235.2 656.7 238.3 C658.5 241.4 659.8 243.9 660.8 248.3 C661.8 252.8 662.0 239.7 662.5 265.0 C663.0 290.3 663.3 369.8 663.5 400.0 C663.7 430.2 663.7 438.3 663.8 446.0 L656.0 446.0 C656.0 438.4 656.2 430.2 656.1 400.1 C655.9 369.9 655.5 290.2 655.1 265.1 C654.7 240.1 654.3 253.8 653.6 249.9 C652.8 246.0 652.1 244.5 650.7 241.9 C649.2 239.2 645.8 235.4 644.8 234.2 Z" fill="#c4c1b6"/>
<path d="M650.0 230.0 C651.1 231.4 654.9 235.2 656.7 238.3 C658.5 241.4 659.8 243.9 660.8 248.3 C661.8 252.8 662.0 239.7 662.5 265.0 C663.0 290.3 663.3 369.8 663.5 400.0 C663.7 430.2 663.7 438.3 663.8 446.0" fill="none" stroke="#000" stroke-width="1.06"/>
<path d="M648.3 231.4 C649.3 232.7 653.0 236.6 654.7 239.5 C656.4 242.4 657.5 244.6 658.4 248.8 C659.3 253.1 659.6 239.8 660.0 265.0 C660.5 290.2 660.8 369.9 661.0 400.0 C661.2 430.2 661.1 438.3 661.2 446.0" fill="none" stroke="#000" stroke-width="1.06"/>
<path d="M646.6 232.8 C647.6 234.1 651.1 237.9 652.7 240.7 C654.2 243.4 655.2 245.3 656.0 249.3 C656.8 253.4 657.1 240.0 657.6 265.1 C658.0 290.2 658.4 369.9 658.6 400.0 C658.7 430.2 658.6 438.4 658.6 446.0" fill="none" stroke="#000" stroke-width="1.06"/>
<path d="M644.8 234.2 C645.8 235.4 649.2 239.2 650.7 241.9 C652.1 244.5 652.8 246.0 653.6 249.9 C654.3 253.8 654.7 240.1 655.1 265.1 C655.5 290.2 655.9 369.9 656.1 400.1 C656.2 430.2 656.0 438.4 656.0 446.0" fill="none" stroke="#000" stroke-width="1.06"/>
<path d="M645.0 315.0 L673.3 333.3 L663.3 349.2 L640.0 334.2 L635.0 323.3 Z" fill="#dbd5ca"/>
<path d="M645.0 315.0 L673.3 333.3" fill="none" stroke="#000" stroke-width="1.00"/>
<path d="M640.0 334.7 L663.3 349.2" fill="none" stroke="#000" stroke-width="1.00"/>
<path d="M645.0 315.0 L638.3 318.3 L634.2 326.7 L635.8 333.3 L640.0 335.0" fill="none" stroke="#000" stroke-width="1.00"/>
<ellipse cx="670.0" cy="341.7" rx="6.0" ry="8.3" transform="rotate(22 670.0 341.7)" fill="#d3cdc2" stroke="#000" stroke-width="1.12"/>
<ellipse cx="670.0" cy="341.7" rx="3.0" ry="4.2" transform="rotate(22 670.0 341.7)" fill="#cec9be" stroke="#000" stroke-width="1.12"/>
<path d="M540.0 315.0 L558.3 319.2 L574.2 325.8 L593.3 315.0 L593.3 319.2 L574.2 330.8 L558.3 324.2 L540.0 320.3 Z" fill="#cec9be" stroke="#000" stroke-width="1.00"/>
<path d="M574.2 325.8 L574.2 330.8" fill="none" stroke="#000" stroke-width="1.00"/>
<path d="M578.3 305.0 L593.3 315.0" fill="none" stroke="#000" stroke-width="1.00"/>
<path d="M559.2 324.2 L559.2 334.2 L565.0 335.8 L565.0 326.7" fill="none" stroke="#000" stroke-width="1.00"/>
<path d="M565.0 331.7 L610.0 352.7" fill="none" stroke="#000" stroke-width="1.00"/>
<path d="M578.3 330.0 L623.3 352.7" fill="none" stroke="#000" stroke-width="1.00"/>
<path d="M593.3 319.2 L633.3 341.7" fill="none" stroke="#000" stroke-width="1.00"/>
<path d="M540.0 328.3 L581.7 352.7" fill="none" stroke="#000" stroke-width="1.00"/>
<path d="M540.0 336.7 L568.3 352.7" fill="none" stroke="#000" stroke-width="1.00"/>
<path d="M479.7 340.0 L655.8 340.0 L655.8 477.7 L479.7 477.7 Z" fill="#d5cfc4"/>
<path d="M530.0 340.0 L560.8 340.0 L604.2 361.3 L604.2 365.8 L611.7 362.5 L611.7 388.3 L598.3 381.7 L578.3 375.8 L553.3 370.0 L528.3 368.0 L511.7 370.0 L496.7 370.8 L485.0 356.7 L482.5 346.7 L486.7 340.0 Z" fill="#d0cabf"/>
<path d="M531.7 340.0 L560.0 340.0 L603.3 361.7 L604.2 365.8 L563.3 345.0 Z" fill="#c8c4b9"/>
<path d="M560.8 340.0 L592.5 340.0 L614.7 354.2 L604.2 361.3 Z" fill="#d7d1c6" stroke="#000" stroke-width="1.00"/>
<path d="M604.2 361.3 L604.2 365.8 L611.7 362.0" fill="none" stroke="#000" stroke-width="1.00"/>
<path d="M531.7 340.0 L603.3 375.8" fill="none" stroke="#000" stroke-width="1.00"/>
<path d="M563.3 345.0 L604.2 365.8" fill="none" stroke="#000" stroke-width="1.00"/>
<path d="M611.7 355.0 L615.3 354.2 L615.3 477.7 L611.7 477.7 Z" fill="#cfc9be" stroke="#000" stroke-width="1.00"/>
<path d="M605.0 406.7 L610.0 390.8 L611.7 388.3 L611.7 477.7 L598.3 470.0 L601.7 433.3 L602.5 426.7 Z" fill="#d3cdc2"/>
<path d="M516.7 375.8 L536.7 372.8 L561.7 375.3 L586.7 382.0 L610.0 390.8 L605.0 406.7 L602.5 426.7 L516.7 379.2 Z" fill="#c6c4b9"/>
<path d="M511.7 370.0 L528.3 368.0 L553.3 370.0 L578.3 375.8 L598.3 381.7 L611.7 388.3 L610.0 390.8 L586.7 381.7 L561.7 375.0 L536.7 372.5 L516.7 375.0 L511.7 374.2 Z" fill="#d1cbc0" stroke="#000" stroke-width="1.00"/>
<path d="M610.0 390.8 L605.0 406.7 L602.5 426.7" fill="none" stroke="#000" stroke-width="1.00"/>
<path d="M516.7 379.2 L602.5 426.7" fill="none" stroke="#000" stroke-width="1.00"/>
<path d="M480.0 398.3 L516.7 380.0 L600.0 426.7 L586.7 425.0 L561.7 418.3 L536.7 414.7 L511.7 416.7 L480.0 434.2 Z" fill="#d7d1c6"/>
<path d="M516.7 422.5 L536.7 419.5 L561.7 422.8 L586.7 429.5 L601.7 433.3 L598.3 470.0 L576.7 463.3 L518.3 427.5 Z" fill="#c6c4b9"/>
<path d="M511.7 416.7 L536.7 414.7 L561.7 418.3 L586.7 425.0 L601.7 430.0 L600.8 433.3 L586.7 429.2 L561.7 422.5 L536.7 419.2 L516.7 421.7 L511.7 420.8 Z" fill="#d1cbc0" stroke="#000" stroke-width="1.00"/>
<path d="M601.7 433.3 L598.3 470.0" fill="none" stroke="#000" stroke-width="1.00"/>
<path d="M518.3 427.5 L576.7 463.3 L598.3 470.0" fill="none" stroke="#000" stroke-width="1.00"/>
<path d="M511.7 370.0 L511.7 374.2 L479.7 390.0 L479.7 385.8 Z" fill="#cfc9be" stroke="#000" stroke-width="1.00"/>
<path d="M516.7 379.2 L480.0 398.3" fill="none" stroke="#000" stroke-width="1.00"/>
<path d="M479.7 395.0 L491.7 388.3" fill="none" stroke="#000" stroke-width="1.00"/>
<path d="M511.7 416.7 L511.7 420.8 L479.7 437.5 L479.7 433.3 Z" fill="#cfc9be" stroke="#000" stroke-width="1.00"/>
<path d="M475.8 381.7 L479.7 381.7 L479.7 477.7 L475.8 477.7 Z" fill="#cfc9be" stroke="#000" stroke-width="1.00"/>
<path d="M482.5 346.7 L485.0 356.7 L496.7 370.8 L476.7 381.7 L470.0 378.3" fill="none" stroke="#000" stroke-width="1.00"/>
<path d="M496.7 370.8 L496.7 375.8 L476.7 386.7" fill="none" stroke="#000" stroke-width="1.00"/>
<path d="M482.5 346.7 L503.3 336.7" fill="none" stroke="#000" stroke-width="1.00"/>
<path d="M480.0 438.3 L507.5 428.3 L495.0 477.7 L480.0 477.7 Z" fill="#c8c4b9"/>
<path d="M508.3 427.5 L566.7 461.7 L550.0 477.7 L495.8 477.7 Z" fill="#d6d0c5"/>
<path d="M508.3 427.5 L495.8 477.7" fill="none" stroke="#000" stroke-width="1.00"/>
<path d="M508.3 427.5 L566.7 461.7" fill="none" stroke="#000" stroke-width="1.00"/>
<path d="M507.5 428.3 L480.0 440.0" fill="none" stroke="#000" stroke-width="1.00"/>
<path d="M566.7 461.7 L576.7 463.3" fill="none" stroke="#000" stroke-width="1.00"/>
<path d="M566.7 461.7 L553.3 477.7" fill="none" stroke="#000" stroke-width="1.00"/>
<path d="M576.7 468.3 L570.0 477.7" fill="none" stroke="#000" stroke-width="1.00"/>
<path d="M576.7 468.3 L598.3 471.7" fill="none" stroke="#000" stroke-width="1.00"/>
<path d="M615.3 385.8 L655.8 363.3 L655.8 367.0 L615.3 389.7 Z" fill="#cfc9be" stroke="#000" stroke-width="1.00"/>
<path d="M615.3 457.5 L655.8 434.7 L655.8 440.0 L615.3 463.0 Z" fill="#cfc9be" stroke="#000" stroke-width="1.00"/>
<path d="M615.3 389.7 L655.8 367.0 L655.8 434.7 L615.3 411.7 Z" fill="#cac6bb"/>
<path d="M615.3 411.7 L655.8 433.3 L655.8 434.7 L615.3 457.5 Z" fill="#d7d1c6"/>
<path d="M615.3 411.7 L655.8 433.3" fill="none" stroke="#000" stroke-width="1.00"/>
<path d="M615.3 354.2 L655.8 340.0 L655.8 363.3 L615.3 385.8 Z" fill="#ccc7bc"/>
<path d="M615.3 340.0 L655.8 361.7" fill="none" stroke="#000" stroke-width="1.00"/>
<path d="M592.5 340.0 L614.7 354.2" fill="none" stroke="#000" stroke-width="1.00"/>
<path d="M615.3 463.0 L655.8 440.0 L655.8 453.3 L645.0 446.7 L615.3 463.0 Z" fill="#cec9be"/>
<path d="M662.5 265.0 C662.7 287.5 663.3 369.8 663.5 400.0 C663.7 430.2 663.4 437.2 663.8 446.0 C664.1 454.8 664.5 450.9 665.5 453.0 C666.5 455.1 667.6 457.5 670.0 458.5 C672.4 459.5 665.0 464.0 680.0 459.2 C695.0 454.4 729.0 441.1 760.0 429.8 C791.0 418.4 848.3 397.5 866.0 391.0 L868.7 398.3 C851.0 404.8 793.8 426.0 762.8 437.4 C731.8 448.9 698.6 462.4 682.6 467.2 C666.5 472.0 670.8 468.0 666.7 466.2 C662.6 464.5 660.0 460.0 658.2 456.7 C656.4 453.3 656.3 455.7 656.0 446.3 C655.6 436.9 656.2 430.3 656.1 400.1 C655.9 369.8 655.3 287.6 655.1 265.1 Z" fill="#c4c1b6"/>
<path d="M662.5 265.0 C662.7 287.5 663.3 369.8 663.5 400.0 C663.7 430.2 663.4 437.2 663.8 446.0 C664.1 454.8 664.5 450.9 665.5 453.0 C666.5 455.1 667.6 457.5 670.0 458.5 C672.4 459.5 665.0 464.0 680.0 459.2 C695.0 454.4 729.0 441.1 760.0 429.8 C791.0 418.4 848.3 397.5 866.0 391.0" fill="none" stroke="#000" stroke-width="1.06"/>
<path d="M660.0 265.0 C660.2 287.5 660.8 369.8 661.0 400.0 C661.2 430.2 660.8 437.1 661.2 446.1 C661.5 455.1 661.8 451.7 663.1 454.2 C664.3 456.7 665.9 459.8 668.9 461.1 C671.9 462.3 665.5 466.7 680.9 461.9 C696.2 457.1 729.9 443.7 760.9 432.3 C791.9 420.9 849.2 399.9 866.9 393.4" fill="none" stroke="#000" stroke-width="1.06"/>
<path d="M657.6 265.0 C657.7 287.5 658.4 369.8 658.6 400.0 C658.7 430.2 658.2 437.0 658.6 446.2 C658.9 455.4 659.1 452.5 660.6 455.4 C662.2 458.3 664.3 462.1 667.8 463.6 C671.3 465.2 666.0 469.3 681.7 464.5 C697.4 459.7 730.9 446.3 761.9 434.9 C792.9 423.4 850.1 402.4 867.8 395.9" fill="none" stroke="#000" stroke-width="1.06"/>
<path d="M655.1 265.1 C655.3 287.6 655.9 369.8 656.1 400.1 C656.2 430.3 655.6 436.9 656.0 446.3 C656.3 455.7 656.4 453.3 658.2 456.7 C660.0 460.0 662.6 464.5 666.7 466.2 C670.8 468.0 666.5 472.0 682.6 467.2 C698.6 462.4 731.8 448.9 762.8 437.4 C793.8 426.0 851.0 404.8 868.7 398.3" fill="none" stroke="#000" stroke-width="1.06"/>
<path d="M425.8 470.0 L615.5 470.0 L615.5 607.7 L425.8 607.7 Z" fill="#d3cdc2"/>
<path d="M425.8 470.0 L456.7 470.0 L456.7 607.7 L425.8 607.7 Z" fill="#cac6bb"/>
<path d="M460.8 470.0 L475.0 470.0 L475.0 607.7 L460.8 607.7 Z" fill="#d0cabf"/>
<path d="M479.2 485.8 L493.3 485.0 L513.3 498.3 L479.2 515.0 Z" fill="#c6c4b9"/>
<path d="M479.2 470.0 L496.7 470.0 L493.3 485.0 L479.2 485.8 Z" fill="#cec9be"/>
<path d="M480.3 478.3 L490.0 474.7 L490.0 481.3 L480.3 484.7 Z" fill="#fff" stroke="#000" stroke-width="1.00"/>
<path d="M480.3 502.5 L490.0 498.3 L490.0 505.0 L480.3 508.0 Z" fill="#fff" stroke="#000" stroke-width="1.00"/>
<path d="M486.7 476.7 L491.7 473.3 L491.7 485.0" fill="none" stroke="#000" stroke-width="1.00"/>
<path d="M486.7 500.0 L491.7 496.7 L491.7 507.5 L480.3 512.5" fill="none" stroke="#000" stroke-width="1.00"/>
<path d="M479.2 517.5 L513.3 499.2 L493.3 485.0" fill="none" stroke="#000" stroke-width="1.00"/>
<path d="M496.7 470.0 L558.3 470.0 L545.0 488.3 L596.7 514.2 L586.7 539.2 L493.3 485.0 Z" fill="#d0cabf"/>
<path d="M493.3 485.0 L586.7 539.2 L592.5 530.8 L596.7 514.2 L545.0 488.3 L558.3 470.0" fill="none" stroke="#000" stroke-width="1.00"/>
<path d="M545.0 488.3 L556.7 483.3 L593.3 501.7" fill="none" stroke="#000" stroke-width="1.00"/>
<path d="M556.7 483.3 L570.0 472.5" fill="none" stroke="#000" stroke-width="1.00"/>
<path d="M584.2 470.0 L584.2 487.5" fill="none" stroke="#000" stroke-width="1.00"/>
<path d="M570.0 472.5 L570.0 480.0" fill="none" stroke="#000" stroke-width="1.00"/>
<path d="M586.7 539.2 L590.0 525.0 L551.7 504.2" fill="none" stroke="#000" stroke-width="1.00"/>
<path d="M592.5 530.8 L615.5 520.0" fill="none" stroke="#000" stroke-width="1.00"/>
<path d="M596.7 514.2 L615.5 505.0" fill="none" stroke="#000" stroke-width="1.00"/>
<path d="M586.7 539.2 L615.5 525.8" fill="none" stroke="#000" stroke-width="1.00"/>
<path d="M496.7 470.0 L493.3 485.0" fill="none" stroke="#000" stroke-width="1.00"/>
<path d="M551.7 490.0 L593.3 510.8 L590.0 525.0 L551.7 504.2 Z" fill="#d6d0c5"/>
<path d="M479.2 553.3 L546.7 517.5 L615.5 560.0 L615.5 574.2 L556.7 607.7 L546.7 607.7 L480.0 569.2 Z" fill="#d8d2c7"/>
<path d="M479.2 551.7 L543.3 516.7 L548.3 519.2 L479.2 555.8 Z" fill="#cfc9be" stroke="#000" stroke-width="1.00"/>
<path d="M540.0 523.3 L615.5 566.7" fill="none" stroke="#000" stroke-width="1.00"/>
<path d="M480.0 569.2 L546.7 607.7" fill="none" stroke="#000" stroke-width="1.00"/>
<path d="M615.5 574.2 L556.7 607.7" fill="none" stroke="#000" stroke-width="1.00"/>
<path d="M615.5 579.2 L566.7 607.7" fill="none" stroke="#000" stroke-width="1.00"/>
<path d="M509.2 590.0 L509.2 607.7" fill="none" stroke="#000" stroke-width="1.00"/>
<path d="M513.3 592.5 L513.3 607.7" fill="none" stroke="#000" stroke-width="1.00"/>
<path d="M480.0 570.0 L509.2 589.2 L509.2 607.7 L480.0 607.7 Z" fill="#c8c4b9"/>
<path d="M456.7 470.0 L460.8 470.0 L460.8 568.3 L456.7 570.0 Z" fill="#cfc9be" stroke="#000" stroke-width="1.00"/>
<path d="M475.0 470.0 L479.2 470.0 L479.2 607.7 L475.0 607.7 Z" fill="#cfc9be" stroke="#000" stroke-width="1.00"/>
<path d="M420.0 470.0 L425.8 470.0 L425.8 607.7 L420.0 607.7 Z" fill="#d3cdc2"/>
<path d="M425.8 470.0 L425.8 607.7" fill="none" stroke="#000" stroke-width="1.12"/>
<path d="M420.0 480.0 L420.0 607.7" fill="none" stroke="#000" stroke-width="1.12"/>
<path d="M428.3 478.3 L445.0 486.7 L456.7 480.8" fill="none" stroke="#000" stroke-width="1.00"/>
<path d="M428.3 478.3 L428.3 483.3 L445.0 491.3 L445.0 486.7" fill="none" stroke="#000" stroke-width="1.00"/>
<path d="M445.0 491.3 L456.7 485.3" fill="none" stroke="#000" stroke-width="1.00"/>
<path d="M425.8 496.7 L436.7 491.7 L436.7 495.8 L425.8 501.7" fill="none" stroke="#000" stroke-width="1.00"/>
<path d="M428.3 548.3 L445.0 556.7 L456.7 550.8" fill="none" stroke="#000" stroke-width="1.00"/>
<path d="M428.3 548.3 L428.3 553.3 L445.0 561.3 L445.0 556.7" fill="none" stroke="#000" stroke-width="1.00"/>
<path d="M445.0 561.3 L456.7 555.3" fill="none" stroke="#000" stroke-width="1.00"/>
<path d="M425.8 566.7 L436.7 561.7 L436.7 565.8 L425.8 571.7" fill="none" stroke="#000" stroke-width="1.00"/>
<path d="M425.8 531.7 L456.7 548.3" fill="none" stroke="#000" stroke-width="1.00"/>
<path d="M460.8 551.7 L475.0 543.3" fill="none" stroke="#000" stroke-width="1.00"/>
<path d="M460.8 568.3 L475.0 560.0" fill="none" stroke="#000" stroke-width="1.00"/>
<path d="M460.8 546.7 L475.0 554.2" fill="none" stroke="#000" stroke-width="1.00"/>
<path d="M436.7 566.7 L475.0 585.0 L479.2 583.3 L484.2 597.5 L465.0 607.7 L477.5 599.2 L474.2 589.2 L433.3 570.0 Z" fill="#cec9be" stroke="#000" stroke-width="1.00"/>
<path d="M426.7 585.0 L440.0 593.3 L448.3 596.7 L475.0 607.7 L426.7 607.7 Z" fill="#dbd5ca"/>
<path d="M448.3 595.0 L440.0 598.3 L436.7 605.0 L437.5 607.7" fill="none" stroke="#000" stroke-width="1.00"/>
<path d="M664.2 400.0 L795.5 400.0 L795.5 417.5 L680.0 459.2 L670.0 455.0 L664.2 441.7 Z" fill="#d6d0c5"/>
<path d="M664.2 407.5 L680.0 402.5" fill="none" stroke="#000" stroke-width="1.00"/>
<path d="M664.2 438.3 L696.7 455.0" fill="none" stroke="#000" stroke-width="1.00"/>
<path d="M600.0 400.0 L655.8 400.0 L655.8 537.7 L600.0 537.7 Z" fill="#d3cdc2"/>
<path d="M615.8 400.0 L655.8 400.0 L655.8 435.8 L615.8 457.5 Z" fill="#cac6bb"/>
<path d="M615.8 411.7 L655.8 431.7 L655.8 435.8 L615.8 457.5 Z" fill="#d7d1c6"/>
<path d="M615.8 411.7 L655.8 431.7" fill="none" stroke="#000" stroke-width="1.00"/>
<path d="M615.8 457.5 L655.8 435.8 L655.8 440.0 L615.8 462.5 Z" fill="#cfc9be" stroke="#000" stroke-width="1.00"/>
<path d="M611.7 400.0 L615.8 400.0 L615.8 480.0 L611.7 481.7 Z" fill="#cfc9be" stroke="#000" stroke-width="1.00"/>
<path d="M600.0 400.0 L607.5 400.0 L600.0 430.0 Z" fill="#c8c4b9"/>
<path d="M607.5 400.0 L601.7 425.0 L600.0 443.3" fill="none" stroke="#000" stroke-width="1.00"/>
<path d="M615.8 463.3 L645.0 448.3 L655.0 455.0 L676.7 503.3 L666.7 515.0 L600.0 475.0 L600.0 470.0 Z" fill="#cec9be"/>
<path d="M635.8 486.7 L644.2 480.8 L676.7 500.0 L666.7 515.0 L638.3 500.0 Z" fill="#dbd5ca"/>
<path d="M644.2 480.8 L673.3 498.3" fill="none" stroke="#000" stroke-width="1.00"/>
<path d="M637.5 499.2 L665.8 515.0" fill="none" stroke="#000" stroke-width="1.00"/>
<path d="M647.5 481.7 L639.2 482.5 L635.0 490.0 L635.8 498.3 L639.2 500.8" fill="none" stroke="#000" stroke-width="1.00"/>
<ellipse cx="671.3" cy="507.5" rx="6.0" ry="8.3" transform="rotate(22 671.3 507.5)" fill="#d3cdc2" stroke="#000" stroke-width="1.12"/>
<ellipse cx="671.3" cy="507.5" rx="3.0" ry="4.2" transform="rotate(22 671.3 507.5)" fill="#cec9be" stroke="#000" stroke-width="1.12"/>
<path d="M600.0 476.7 L666.7 516.7 L675.8 520.0 L675.8 537.7 L600.0 537.7 Z" fill="#d3cdc2"/>
<path d="M600.0 498.3 L675.8 537.7" fill="none" stroke="#000" stroke-width="1.00"/>
<path d="M600.0 515.0 L625.0 512.5 L625.0 537.7" fill="none" stroke="#000" stroke-width="1.00"/>
<path d="M600.0 525.0 L621.7 515.0 L621.7 537.7" fill="none" stroke="#000" stroke-width="1.00"/>
<path d="M625.0 516.7 L660.0 537.7" fill="none" stroke="#000" stroke-width="1.00"/>
<path d="M675.8 471.7 L680.0 470.0 L680.0 537.7 L675.8 537.7 Z" fill="#cfc9be" stroke="#000" stroke-width="1.00"/>
<path d="M680.0 468.3 L795.5 427.5 L795.5 537.7 L680.0 537.7 Z" fill="#cac6bb"/>
<path d="M680.0 530.0 L795.5 480.0 L795.5 537.7 L680.0 537.7 Z" fill="#d3cdc2"/>
<path d="M680.0 530.0 L795.5 480.0" fill="none" stroke="#000" stroke-width="1.00"/>
<path d="M662.5 265.0 C662.7 287.5 663.3 369.8 663.5 400.0 C663.7 430.2 663.4 437.2 663.8 446.0 C664.1 454.8 664.5 450.9 665.5 453.0 C666.5 455.1 667.6 457.5 670.0 458.5 C672.4 459.5 665.0 464.0 680.0 459.2 C695.0 454.4 729.0 441.1 760.0 429.8 C791.0 418.4 848.3 397.5 866.0 391.0 L868.7 398.3 C851.0 404.8 793.8 426.0 762.8 437.4 C731.8 448.9 698.6 462.4 682.6 467.2 C666.5 472.0 670.8 468.0 666.7 466.2 C662.6 464.5 660.0 460.0 658.2 456.7 C656.4 453.3 656.3 455.7 656.0 446.3 C655.6 436.9 656.2 430.3 656.1 400.1 C655.9 369.8 655.3 287.6 655.1 265.1 Z" fill="#c4c1b6"/>
<path d="M662.5 265.0 C662.7 287.5 663.3 369.8 663.5 400.0 C663.7 430.2 663.4 437.2 663.8 446.0 C664.1 454.8 664.5 450.9 665.5 453.0 C666.5 455.1 667.6 457.5 670.0 458.5 C672.4 459.5 665.0 464.0 680.0 459.2 C695.0 454.4 729.0 441.1 760.0 429.8 C791.0 418.4 848.3 397.5 866.0 391.0" fill="none" stroke="#000" stroke-width="1.06"/>
<path d="M660.0 265.0 C660.2 287.5 660.8 369.8 661.0 400.0 C661.2 430.2 660.8 437.1 661.2 446.1 C661.5 455.1 661.8 451.7 663.1 454.2 C664.3 456.7 665.9 459.8 668.9 461.1 C671.9 462.3 665.5 466.7 680.9 461.9 C696.2 457.1 729.9 443.7 760.9 432.3 C791.9 420.9 849.2 399.9 866.9 393.4" fill="none" stroke="#000" stroke-width="1.06"/>
<path d="M657.6 265.0 C657.7 287.5 658.4 369.8 658.6 400.0 C658.7 430.2 658.2 437.0 658.6 446.2 C658.9 455.4 659.1 452.5 660.6 455.4 C662.2 458.3 664.3 462.1 667.8 463.6 C671.3 465.2 666.0 469.3 681.7 464.5 C697.4 459.7 730.9 446.3 761.9 434.9 C792.9 423.4 850.1 402.4 867.8 395.9" fill="none" stroke="#000" stroke-width="1.06"/>
<path d="M655.1 265.1 C655.3 287.6 655.9 369.8 656.1 400.1 C656.2 430.3 655.6 436.9 656.0 446.3 C656.3 455.7 656.4 453.3 658.2 456.7 C660.0 460.0 662.6 464.5 666.7 466.2 C670.8 468.0 666.5 472.0 682.6 467.2 C698.6 462.4 731.8 448.9 762.8 437.4 C793.8 426.0 851.0 404.8 868.7 398.3" fill="none" stroke="#000" stroke-width="1.06"/>
<path d="M723.3 454.2 L727.5 453.0 L727.5 473.3 L723.3 475.0 Z" fill="#cfc9be" stroke="#000" stroke-width="1.00"/>
<path d="M716.7 470.0 L723.3 475.0" fill="none" stroke="#000" stroke-width="1.00"/>
<path d="M680.0 473.3 L703.3 464.2 L715.0 473.3 L706.7 486.7 Z" fill="#d3cdc2"/>
<ellipse cx="703.3" cy="475.8" rx="8.7" ry="11.7" transform="rotate(22 703.3 475.8)" fill="#d3cdc2" stroke="#000" stroke-width="1.12"/>
<ellipse cx="703.3" cy="475.8" rx="3.9" ry="5.2" transform="rotate(22 703.3 475.8)" fill="#cec9be" stroke="#000" stroke-width="1.12"/>
<path d="M706.7 480.0 L730.0 471.7 L753.3 486.7 L743.3 510.0 L726.7 506.7 Z" fill="#dad4c9"/>
<path d="M729.2 471.7 L745.0 482.5" fill="none" stroke="#000" stroke-width="1.00"/>
<ellipse cx="742.5" cy="497.5" rx="10.0" ry="13.7" transform="rotate(22 742.5 497.5)" fill="#d3cdc2" stroke="#000" stroke-width="1.12"/>
<ellipse cx="742.5" cy="497.5" rx="5.5" ry="7.5" transform="rotate(22 742.5 497.5)" fill="#cec9be" stroke="#000" stroke-width="1.12"/>
<path d="M741.7 475.8 L795.5 447.5" fill="none" stroke="#000" stroke-width="1.00"/>
<path d="M745.0 478.3 L795.5 452.5" fill="none" stroke="#000" stroke-width="1.00"/>
<path d="M753.3 496.7 L795.5 478.3" fill="none" stroke="#000" stroke-width="1.00"/>
<path d="M750.0 537.7 L795.5 510.0" fill="none" stroke="#000" stroke-width="1.00"/>
<path d="M741.7 475.8 L795.5 447.5 L795.5 452.5 L745.0 478.3 Z" fill="#d6d0c5"/>
<path d="M760.0 438.5 L801.9 426.6 L813.8 434.8 L813.8 439.1 L835.0 452.2 L836.2 461.0 L840.0 469.8 L847.5 476.0 L886.2 499.0 L760.0 499.0 Z" fill="#d6d0c5"/>
<path d="M760.0 442.2 L801.9 426.6 L813.8 434.8 L760.0 464.8 Z" fill="#d8d2c7"/>
<path d="M760.0 464.8 L813.8 434.8 L813.8 438.8 L760.0 469.1 Z" fill="#cec9be" stroke="#000" stroke-width="1.00"/>
<path d="M760.0 469.5 L813.8 439.1 L835.0 452.2 L836.2 459.8 L760.0 496.0 Z" fill="#c4c2b7"/>
<path d="M801.9 426.6 L813.8 434.8" fill="none" stroke="#000" stroke-width="1.00"/>
<path d="M836.2 459.8 L760.0 496.0" fill="none" stroke="#000" stroke-width="1.00"/>
<path d="M846.2 476.0 L811.2 499.0" fill="none" stroke="#000" stroke-width="1.00"/>
<path d="M836.2 452.9 L836.2 461.0 L840.0 469.8 L847.5 476.0 L886.2 499.0" fill="none" stroke="#000" stroke-width="1.00"/>
<path d="M838.5 453.5 L838.5 460.4 L841.9 467.9 L848.8 474.1 L890.0 499.0" fill="none" stroke="#000" stroke-width="1.00"/>
<path d="M833.8 402.5 L866.2 403.5 L866.9 408.5 L841.2 419.8 L835.0 416.6 Z" fill="#cec9be"/>
<path d="M866.2 403.5 L866.9 408.5 L841.2 419.8" fill="none" stroke="#000" stroke-width="1.00"/>
<path d="M760.0 438.5 L866.9 408.5" fill="none" stroke="#000" stroke-width="1.00"/>
<path d="M813.8 427.2 L835.0 416.6 L852.5 427.2 L835.0 452.2 L813.8 442.2 Z" fill="#dad4c9"/>
<path d="M835.0 416.6 L847.5 424.1" fill="none" stroke="#000" stroke-width="1.00"/>
<path d="M813.8 442.2 L833.8 451.6" fill="none" stroke="#000" stroke-width="1.00"/>
<ellipse cx="842.5" cy="439.1" rx="10.6" ry="14.4" transform="rotate(22 842.5 439.1)" fill="#d3cdc2" stroke="#000" stroke-width="1.12"/>
<ellipse cx="842.5" cy="439.1" rx="6.2" ry="8.3" transform="rotate(22 842.5 439.1)" fill="#cec9be" stroke="#000" stroke-width="1.12"/>
<path d="M580.0 500.0 L676.2 500.0 L676.2 546.2 L688.8 577.5 L631.2 623.8 L665.0 643.8 L665.0 678.8 L622.5 706.0 L580.0 706.0 Z" fill="#d5cfc4"/>
<path d="M680.0 532.5 L730.0 507.5 L760.0 500.0 L808.8 500.0 L690.0 575.0 L688.8 537.5 Z" fill="#d0cabf"/>
<path d="M680.0 500.0 L760.0 500.0 L730.0 507.5 L680.0 532.5 Z" fill="#c8c4b9"/>
<path d="M808.8 500.0 L690.0 575.0 L631.2 623.8" fill="none" stroke="#000" stroke-width="1.00"/>
<path d="M730.0 507.5 L682.5 531.2" fill="none" stroke="#000" stroke-width="1.00"/>
<path d="M625.0 513.8 L676.2 546.2 L676.2 500.0 L637.5 500.0 Z" fill="#d0cabf"/>
<path d="M676.2 500.0 L680.0 500.0 L680.0 531.2 L688.8 537.5 L688.8 577.5 L683.8 575.0 L676.2 546.2 Z" fill="#cec9be" stroke="#000" stroke-width="1.00"/>
<path d="M676.2 546.2 L688.8 537.5" fill="none" stroke="#000" stroke-width="1.00"/>
<path d="M676.2 546.2 L676.2 500.0" fill="none" stroke="#000" stroke-width="1.00"/>
<path d="M671.2 570.0 L683.8 576.2 L688.8 577.5" fill="none" stroke="#000" stroke-width="1.00"/>
<path d="M625.0 513.8 L676.2 546.2" fill="none" stroke="#000" stroke-width="1.00"/>
<path d="M627.5 518.8 L676.2 547.5 L685.0 575.0 L671.2 570.0 L642.5 586.2 L625.0 587.5 L625.0 572.5 Z" fill="#d3cdc2"/>
<path d="M580.0 510.0 L597.5 515.0 L590.0 538.8 L625.0 520.0 L625.0 572.5 L580.0 595.0 Z" fill="#d6d0c5"/>
<path d="M590.0 538.8 L620.0 523.8 L620.0 570.0 L580.0 590.0 L580.0 535.0 Z" fill="#d1cbc0"/>
<path d="M580.0 510.0 L597.5 515.0 L590.0 538.8 L625.0 520.0 L625.0 572.5 L580.0 595.0" fill="none" stroke="#000" stroke-width="1.00"/>
<path d="M590.0 538.8 L580.0 535.0" fill="none" stroke="#000" stroke-width="1.00"/>
<path d="M620.0 523.8 L620.0 570.0 L580.0 590.0" fill="none" stroke="#000" stroke-width="1.00"/>
<path d="M597.5 515.0 L625.0 500.0" fill="none" stroke="#000" stroke-width="1.00"/>
<path d="M625.0 520.0 L625.0 513.8 L605.0 500.0" fill="none" stroke="#000" stroke-width="1.00"/>
<ellipse cx="638.0" cy="550.0" rx="10.0" ry="13.8" transform="rotate(22 638.0 550.0)" fill="#d3cdc2" stroke="#000" stroke-width="1.12"/>
<ellipse cx="638.0" cy="550.0" rx="4.5" ry="6.2" transform="rotate(22 638.0 550.0)" fill="#cec9be" stroke="#000" stroke-width="1.12"/>
<ellipse cx="670.5" cy="507.5" rx="6.0" ry="8.5" transform="rotate(22 670.5 507.5)" fill="#d3cdc2" stroke="#000" stroke-width="1.12"/>
<ellipse cx="670.5" cy="507.5" rx="3.0" ry="4.2" transform="rotate(22 670.5 507.5)" fill="#cec9be" stroke="#000" stroke-width="1.12"/>
<ellipse cx="742.5" cy="501.2" rx="10.5" ry="14.5" transform="rotate(22 742.5 501.2)" fill="#d3cdc2" stroke="#000" stroke-width="1.12"/>
<ellipse cx="742.5" cy="501.2" rx="5.8" ry="8.0" transform="rotate(22 742.5 501.2)" fill="#cec9be" stroke="#000" stroke-width="1.12"/>
<path d="M580.0 615.0 L605.0 608.8 L605.0 602.5 L612.5 593.8 L625.0 587.5 L642.5 586.2 L671.2 570.0 L685.0 577.5 L631.2 623.8 L605.0 610.0 L580.0 622.5 Z" fill="#d8d2c7"/>
<path d="M580.0 615.0 L605.0 608.8 L605.0 602.5 L612.5 593.8 L625.0 587.5 L642.5 586.2 L671.2 570.0 L685.0 577.5" fill="none" stroke="#000" stroke-width="1.00"/>
<path d="M612.5 593.8 L620.0 605.0 L633.8 617.5" fill="none" stroke="#000" stroke-width="1.00"/>
<path d="M605.0 608.8 L631.2 623.8" fill="none" stroke="#000" stroke-width="1.00"/>
<path d="M580.0 622.5 L605.0 610.0" fill="none" stroke="#000" stroke-width="1.00"/>
<path d="M642.5 586.2 L642.5 590.0 L672.5 573.8" fill="none" stroke="#000" stroke-width="1.00"/>
<path d="M633.8 625.0 L665.0 643.8" fill="none" stroke="#000" stroke-width="1.00"/>
<path d="M665.0 650.0 L686.2 662.5" fill="none" stroke="#000" stroke-width="1.00"/>
<path d="M597.5 660.0 L602.5 650.0 L617.5 641.2 L635.0 638.8 L652.5 640.0 L665.0 643.8 L665.0 678.8 L645.0 672.5 L625.0 673.8 L607.5 678.8 L600.0 670.0 Z" fill="#c6c4b9"/>
<path d="M647.5 645.0 L665.0 643.8 L665.0 678.8 L647.5 672.5 Z" fill="#cfc9be"/>
<path d="M621.2 645.0 L627.5 643.8 L627.5 673.8 L621.2 675.0 Z" fill="#d3cdc2"/>
<path d="M597.5 660.0 L602.5 650.0 L617.5 641.2 L635.0 638.8 L652.5 640.0 L665.0 643.8 L665.0 678.8" fill="none" stroke="#000" stroke-width="1.00"/>
<path d="M607.5 678.8 L625.0 673.8 L645.0 672.5 L665.0 678.8" fill="none" stroke="#000" stroke-width="1.00"/>
<path d="M600.0 662.5 L605.0 653.8 L617.5 646.2 L621.2 645.0 L621.2 675.0" fill="none" stroke="#000" stroke-width="1.00"/>
<path d="M627.5 643.8 L627.5 673.8" fill="none" stroke="#000" stroke-width="1.00"/>
<path d="M647.5 645.0 L647.5 672.5" fill="none" stroke="#000" stroke-width="1.00"/>
<path d="M627.5 643.8 L647.5 645.0" fill="none" stroke="#000" stroke-width="1.00"/>
<path d="M597.5 660.0 L600.0 670.0 L607.5 678.8 L607.5 706.0" fill="none" stroke="#000" stroke-width="1.00"/>
<path d="M600.0 662.5 L621.2 672.5" fill="none" stroke="#000" stroke-width="1.00"/>
<path d="M627.5 662.5 L647.5 672.5" fill="none" stroke="#000" stroke-width="1.00"/>
<path d="M580.0 662.5 L607.5 678.0" fill="none" stroke="#000" stroke-width="1.00"/>
<path d="M580.0 697.5 L607.5 692.5" fill="none" stroke="#000" stroke-width="1.00"/>
<path d="M580.0 690.0 L607.5 686.2" fill="none" stroke="#000" stroke-width="1.00"/>
<path d="M907.5 518.0 L687.5 667.5 L665.0 678.8 L622.5 706.0 L588.0 730.0 L584.8 725.4 L619.4 701.3 L662.1 673.9 L684.4 662.8 L904.4 513.4 Z" fill="#ccc7bc"/>
<path d="M906.6 516.7 L686.6 666.2 L664.2 677.4 L621.6 704.7 L587.1 728.7" fill="none" stroke="#2a2a2a" stroke-width="0.88"/>
<path d="M905.8 515.5 L685.8 665.0 L663.5 676.2 L620.8 703.5 L586.3 727.5" fill="none" stroke="#2a2a2a" stroke-width="0.88"/>
<path d="M905.1 514.4 L685.1 663.9 L662.8 675.1 L620.1 702.4 L585.5 726.5" fill="none" stroke="#2a2a2a" stroke-width="0.88"/>
<path d="M904.4 513.4 L684.4 662.8 L662.1 673.9 L619.4 701.3 L584.8 725.4" fill="none" stroke="#2a2a2a" stroke-width="0.88"/>
<path d="M906.2 510.6 L907.5 518.0" fill="none" stroke="#000" stroke-width="1.12"/>
<path d="M836.5 452.0 L836.5 462.0 L840.0 469.0 L846.2 475.0 L906.2 510.6" fill="none" stroke="#000" stroke-width="1.00"/>
<path d="M838.8 452.0 L838.8 461.0 L842.0 467.5 L848.0 473.0 L907.0 508.5" fill="none" stroke="#000" stroke-width="1.00"/>
<path d="M420.0 590.0 L510.0 590.0 L510.0 623.8 L518.8 628.8 L498.8 671.2 L523.8 645.0 L607.5 693.8 L607.5 712.5 L572.5 737.5 L535.0 762.5 L497.5 781.2 L467.5 788.8 L435.0 788.8 L410.0 780.0 L410.0 665.0 L420.0 652.5 Z" fill="#d5cfc4"/>
<path d="M420.0 590.0 L447.5 590.0 L447.5 665.0 L420.0 680.0 Z" fill="#cac6bb"/>
<path d="M451.2 590.0 L510.0 590.0 L510.0 623.8 L451.2 652.5 Z" fill="#d0cabf"/>
<path d="M451.2 620.0 L510.0 623.8 L518.8 628.8 L451.2 662.5 Z" fill="#d8d2c7"/>
<path d="M510.0 590.0 L510.0 623.8 L518.8 628.8 L447.5 665.0" fill="none" stroke="#000" stroke-width="1.00"/>
<path d="M513.8 590.0 L513.8 625.0" fill="none" stroke="#000" stroke-width="1.00"/>
<path d="M518.8 628.8 L518.8 635.0 L450.0 670.0" fill="none" stroke="#000" stroke-width="1.00"/>
<path d="M447.5 590.0 L447.5 676.2 L451.2 677.5 L451.2 670.0" fill="none" stroke="#000" stroke-width="1.00"/>
<path d="M451.2 590.0 L451.2 662.5" fill="none" stroke="#000" stroke-width="1.00"/>
<path d="M451.2 670.0 L463.8 663.8 L463.8 705.0 L470.0 702.5 L470.0 700.0 L466.2 698.8 L466.2 665.0 L451.2 676.2 Z" fill="#cac6bb" stroke="#000" stroke-width="1.00"/>
<path d="M430.0 690.0 L430.0 697.5 L435.0 697.5 L435.0 688.8" fill="none" stroke="#000" stroke-width="1.00"/>
<path d="M467.5 686.2 L498.8 671.2 L498.8 665.0 L497.5 657.5 L505.0 647.5 L522.5 641.2 L546.2 641.2 L548.8 643.8 L605.0 612.5 L605.0 605.0 L610.0 595.0 L622.5 590.0 L672.5 590.0 L636.2 622.5 L665.0 642.5 L665.0 680.0 L607.5 675.0 L607.5 693.8 L523.8 645.0 L498.8 672.5 L467.5 690.0 Z" fill="#d7d1c6"/>
<path d="M467.5 686.2 L498.8 671.2 L498.8 665.0 L497.5 657.5 L505.0 647.5 L522.5 641.2 L546.2 641.2 L548.8 643.8 L605.0 612.5 L605.0 605.0 L610.0 595.0 L622.5 590.0" fill="none" stroke="#000" stroke-width="1.00"/>
<path d="M467.5 690.0 L498.8 675.0 L498.8 671.2" fill="none" stroke="#000" stroke-width="1.00"/>
<path d="M548.8 643.8 L546.2 641.2" fill="none" stroke="#000" stroke-width="1.00"/>
<path d="M605.0 612.5 L636.2 622.5 L672.5 590.0" fill="none" stroke="#000" stroke-width="1.00"/>
<path d="M610.0 595.0 L622.5 612.5 L636.2 622.5" fill="none" stroke="#000" stroke-width="1.00"/>
<path d="M636.2 622.5 L665.0 642.5" fill="none" stroke="#000" stroke-width="1.00"/>
<path d="M523.8 644.5 L547.0 641.8 L607.5 676.2 L607.5 693.8 Z" fill="#c6c4b9" stroke="#000" stroke-width="1.00"/>
<path d="M498.8 675.0 L523.8 645.0 L607.5 693.8 L607.5 697.5 L510.0 750.0 L435.0 700.0 L467.5 690.0 Z" fill="#d8d2c7"/>
<path d="M510.0 750.0 L607.5 697.5 L607.5 702.5 L515.0 753.8 Z" fill="#cfc9be" stroke="#000" stroke-width="1.00"/>
<path d="M515.0 753.8 L607.5 702.5 L607.5 712.5 L572.5 737.5 L535.0 762.5 L515.0 770.0 Z" fill="#cac6bb"/>
<path d="M520.0 751.2 L552.5 733.8 L552.5 746.2 L520.0 763.8 Z" fill="#d3cdc2"/>
<path d="M557.5 730.0 L590.0 712.5 L607.5 712.5 L572.5 737.5 L557.5 743.8 Z" fill="#d3cdc2"/>
<path d="M552.5 728.8 L552.5 746.2" fill="none" stroke="#000" stroke-width="1.00"/>
<path d="M557.5 726.2 L557.5 743.8" fill="none" stroke="#000" stroke-width="1.00"/>
<path d="M515.0 752.5 L515.0 766.2" fill="none" stroke="#000" stroke-width="1.00"/>
<path d="M520.0 750.0 L520.0 764.2" fill="none" stroke="#000" stroke-width="1.00"/>
<path d="M607.5 675.0 L607.5 712.5" fill="none" stroke="#000" stroke-width="1.00"/>
<path d="M603.8 700.0 L603.8 710.0" fill="none" stroke="#000" stroke-width="1.00"/>
<path d="M567.5 720.0 L580.0 730.0" fill="none" stroke="#000" stroke-width="1.00"/>
<path d="M572.5 717.5 L585.0 726.2" fill="none" stroke="#000" stroke-width="1.00"/>
<path d="M537.5 740.0 L552.5 746.2" fill="none" stroke="#000" stroke-width="1.00"/>
<path d="M513.8 590.0 L552.5 610.0 L597.5 590.0 Z" fill="#d8d2c7"/>
<path d="M552.5 610.0 L597.5 590.0 L607.5 590.0 L552.5 615.0 Z" fill="#cec9be" stroke="#000" stroke-width="1.00"/>
<path d="M513.8 590.0 L552.5 610.0 L552.5 615.0 L518.8 597.5" fill="none" stroke="#000" stroke-width="1.00"/>
<path d="M436.2 603.8 L445.0 596.2 L478.8 613.8 L466.2 632.5 L437.5 615.0 Z" fill="#dbd5ca"/>
<path d="M447.5 595.5 L440.0 598.0 L436.2 606.2 L438.0 613.8 L441.2 616.2" fill="none" stroke="#000" stroke-width="1.00"/>
<path d="M447.5 595.5 L475.5 611.2" fill="none" stroke="#000" stroke-width="1.00"/>
<path d="M441.2 616.2 L466.2 631.2" fill="none" stroke="#000" stroke-width="1.00"/>
<ellipse cx="472.0" cy="621.2" rx="6.0" ry="9.0" transform="rotate(22 472.0 621.2)" fill="#d3cdc2" stroke="#000" stroke-width="1.12"/>
<ellipse cx="472.0" cy="621.2" rx="3.0" ry="4.5" transform="rotate(22 472.0 621.2)" fill="#cec9be" stroke="#000" stroke-width="1.12"/>
<path d="M465.0 606.2 L482.5 598.8 L477.5 587.5" fill="none" stroke="#000" stroke-width="1.00"/>
<path d="M466.2 602.5 L478.8 597.5" fill="none" stroke="#000" stroke-width="1.00"/>
<path d="M410.0 700.0 L422.5 700.0 L506.2 750.0 L495.0 766.2 L410.0 715.0 Z" fill="#cfc9be"/>
<path d="M467.5 740.0 L480.0 732.5 L507.5 750.0 L495.0 766.2 L472.5 755.0 Z" fill="#dbd5ca"/>
<path d="M422.5 700.0 L506.2 750.0" fill="none" stroke="#000" stroke-width="1.00"/>
<path d="M410.0 713.8 L495.0 765.5" fill="none" stroke="#000" stroke-width="1.00"/>
<path d="M480.0 732.5 L471.2 735.0 L467.0 743.8 L468.8 752.5 L473.8 756.2" fill="none" stroke="#000" stroke-width="1.00"/>
<ellipse cx="501.2" cy="757.5" rx="6.2" ry="9.0" transform="rotate(22 501.2 757.5)" fill="#d3cdc2" stroke="#000" stroke-width="1.12"/>
<ellipse cx="501.2" cy="757.5" rx="3.1" ry="4.5" transform="rotate(22 501.2 757.5)" fill="#cec9be" stroke="#000" stroke-width="1.12"/>
<path d="M410.0 765.0 L447.5 783.8 L495.0 765.0" fill="none" stroke="#000" stroke-width="1.00"/>
<path d="M452.5 785.0 L510.0 757.5" fill="none" stroke="#000" stroke-width="1.00"/>
<path d="M420.0 590.0 L421.2 652.5 L417.5 667.5 L410.0 677.5" fill="none" stroke="#000" stroke-width="1.12"/>
<path d="M426.2 590.0 L427.0 655.0 L422.5 670.0 L410.0 682.5" fill="none" stroke="#000" stroke-width="1.12"/>
<path d="M418.8 647.5 L400.0 642.5 L380.0 643.8 L360.0 653.8 L348.8 670.0 L345.5 687.5 L347.5 700.0 L355.0 710.0 L385.0 697.5 L410.0 680.0 L420.0 667.5 Z" fill="#cecac0"/>
<path d="M412.5 663.8 L387.5 660.0 L370.0 666.2 L357.5 682.5 L352.5 697.5 L355.0 710.0 L385.0 697.5 L410.0 680.0 L416.2 671.2 Z" fill="#d6d0c5"/>
<path d="M418.8 647.5 C415.6 646.7 406.5 643.1 400.0 642.5 C393.5 641.9 386.7 641.9 380.0 643.8 C373.3 645.6 365.2 649.4 360.0 653.8 C354.8 658.1 351.2 664.4 348.8 670.0 C346.3 675.6 345.7 682.1 345.5 687.5 C345.3 692.9 347.2 700.0 347.5 702.5" fill="none" stroke="#000" stroke-width="1.00"/>
<path d="M412.5 663.8 C408.3 663.1 394.6 659.6 387.5 660.0 C380.4 660.4 375.0 662.5 370.0 666.2 C365.0 670.0 360.4 677.3 357.5 682.5 C354.6 687.7 353.5 693.3 352.5 697.5 C351.5 701.7 351.5 705.8 351.2 707.5" fill="none" stroke="#000" stroke-width="1.00"/>
<path d="M410.0 667.5 C406.7 666.9 396.0 663.3 390.0 663.8 C384.0 664.2 378.3 666.5 373.8 670.0 C369.2 673.5 365.4 680.0 362.5 685.0 C359.6 690.0 357.7 695.8 356.2 700.0 C354.8 704.2 354.2 708.3 353.8 710.0" fill="none" stroke="#000" stroke-width="1.00"/>
<path d="M405.0 671.2 C402.5 670.7 394.6 667.6 390.0 668.0 C385.4 668.4 381.5 670.3 377.5 673.8 C373.5 677.2 369.2 684.0 366.2 688.8 C363.3 693.5 361.0 700.2 360.0 702.5" fill="none" stroke="#000" stroke-width="1.00"/>
<path d="M425.0 653.8 L420.0 670.0 L410.0 682.5 L385.0 700.0 L355.0 715.0 L330.0 720.0 L317.5 719.2 L337.5 715.0 L352.5 710.0 L380.0 697.5 L405.0 682.5 L416.2 671.2 L420.0 657.5 Z" fill="#cdc7bc"/>
<path d="M426.2 640.0 C426.0 642.3 426.0 648.8 425.0 653.8 C424.0 658.8 422.5 665.2 420.0 670.0 C417.5 674.8 415.8 677.5 410.0 682.5 C404.2 687.5 394.2 694.6 385.0 700.0 C375.8 705.4 364.2 711.7 355.0 715.0 C345.8 718.3 342.5 718.5 330.0 720.0 C317.5 721.5 288.3 723.1 280.0 723.8" fill="none" stroke="#000" stroke-width="1.12"/>
<path d="M420.0 650.0 C419.4 653.5 418.8 665.8 416.2 671.2 C413.8 676.7 411.0 678.1 405.0 682.5 C399.0 686.9 388.8 692.9 380.0 697.5 C371.2 702.1 359.2 707.2 352.5 710.0 C345.8 712.8 342.1 713.8 340.0 714.5" fill="none" stroke="#000" stroke-width="1.12"/>
<path d="M330.0 721.2 L355.0 715.5 L385.0 700.5 L410.0 683.0 L420.0 670.5 L426.2 667.5 L451.2 677.5 L451.2 682.5 L410.0 706.2 L410.0 785.0 L355.0 788.0 L317.5 772.5 L327.5 746.2 Z" fill="#d5cfc4"/>
<path d="M330.0 721.2 L355.0 715.5 L385.0 700.5 L400.0 692.5 L362.5 730.0 L327.5 746.2 Z" fill="#c4c2b8"/>
<path d="M451.2 675.5 L451.2 681.8 L327.5 748.0 L330.0 742.5 Z" fill="#cfc9be" stroke="#000" stroke-width="1.00"/>
<path d="M430.0 690.0 L430.0 696.8 L435.5 696.8 L435.5 687.5" fill="none" stroke="#000" stroke-width="1.00"/>
<path d="M387.5 720.0 C388.1 723.3 387.5 733.3 391.2 740.0 C395.0 746.7 399.4 752.8 410.0 760.0 C420.6 767.2 447.5 779.2 455.0 783.0" fill="none" stroke="#000" stroke-width="1.00"/>
<path d="M362.5 730.0 L445.0 782.5" fill="none" stroke="#000" stroke-width="1.00"/>
<path d="M420.0 700.0 L505.0 748.8 L492.5 763.8 L400.0 710.0 Z" fill="#cdc7bc"/>
<path d="M466.2 735.0 L477.5 731.2 L506.2 748.8 L492.5 763.8 L471.2 752.5 Z" fill="#dbd5ca"/>
<path d="M420.0 700.0 L505.0 748.8" fill="none" stroke="#000" stroke-width="1.00"/>
<path d="M400.0 710.0 L492.5 763.0" fill="none" stroke="#000" stroke-width="1.00"/>
<path d="M478.8 732.5 L470.0 735.0 L466.2 743.8 L468.0 751.2 L472.5 755.0" fill="none" stroke="#000" stroke-width="1.00"/>
<ellipse cx="501.2" cy="757.5" rx="6.2" ry="9.0" transform="rotate(22 501.2 757.5)" fill="#d3cdc2" stroke="#000" stroke-width="1.12"/>
<ellipse cx="501.2" cy="757.5" rx="3.1" ry="4.5" transform="rotate(22 501.2 757.5)" fill="#cec9be" stroke="#000" stroke-width="1.12"/>
<path d="M452.5 783.8 L495.0 763.8" fill="none" stroke="#000" stroke-width="1.00"/>
<path d="M446.2 782.5 L452.5 785.0" fill="none" stroke="#000" stroke-width="1.00"/>
<path d="M418.8 647.5 L400.0 642.5 L380.0 643.8 L360.0 653.8 L348.8 670.0 L345.5 687.5 L347.5 700.0 L355.0 710.0 L385.0 697.5 L410.0 680.0 L420.0 667.5 Z" fill="#cecac0"/>
<path d="M412.5 663.8 L387.5 660.0 L370.0 666.2 L357.5 682.5 L352.5 697.5 L355.0 710.0 L385.0 697.5 L410.0 680.0 L416.2 671.2 Z" fill="#d6d0c5"/>
<path d="M418.8 647.5 C415.6 646.7 406.5 643.1 400.0 642.5 C393.5 641.9 386.7 641.9 380.0 643.8 C373.3 645.6 365.2 649.4 360.0 653.8 C354.8 658.1 351.2 664.4 348.8 670.0 C346.3 675.6 345.7 682.1 345.5 687.5 C345.3 692.9 347.2 700.0 347.5 702.5" fill="none" stroke="#000" stroke-width="1.00"/>
<path d="M412.5 663.8 C408.3 663.1 394.6 659.6 387.5 660.0 C380.4 660.4 375.0 662.5 370.0 666.2 C365.0 670.0 360.4 677.3 357.5 682.5 C354.6 687.7 353.5 693.3 352.5 697.5 C351.5 701.7 351.5 705.8 351.2 707.5" fill="none" stroke="#000" stroke-width="1.00"/>
<path d="M410.0 667.5 C406.7 666.9 396.0 663.3 390.0 663.8 C384.0 664.2 378.3 666.5 373.8 670.0 C369.2 673.5 365.4 680.0 362.5 685.0 C359.6 690.0 357.7 695.8 356.2 700.0 C354.8 704.2 354.2 708.3 353.8 710.0" fill="none" stroke="#000" stroke-width="1.00"/>
<path d="M405.0 671.2 C402.5 670.7 394.6 667.6 390.0 668.0 C385.4 668.4 381.5 670.3 377.5 673.8 C373.5 677.2 369.2 684.0 366.2 688.8 C363.3 693.5 361.0 700.2 360.0 702.5" fill="none" stroke="#000" stroke-width="1.00"/>
<path d="M425.0 653.8 L420.0 670.0 L410.0 682.5 L385.0 700.0 L355.0 715.0 L330.0 720.0 L317.5 719.2 L337.5 715.0 L352.5 710.0 L380.0 697.5 L405.0 682.5 L416.2 671.2 L420.0 657.5 Z" fill="#cdc7bc"/>
<path d="M426.2 640.0 C426.0 642.3 426.0 648.8 425.0 653.8 C424.0 658.8 422.5 665.2 420.0 670.0 C417.5 674.8 415.8 677.5 410.0 682.5 C404.2 687.5 394.2 694.6 385.0 700.0 C375.8 705.4 364.2 711.7 355.0 715.0 C345.8 718.3 342.5 718.5 330.0 720.0 C317.5 721.5 288.3 723.1 280.0 723.8" fill="none" stroke="#000" stroke-width="1.12"/>
<path d="M420.0 650.0 C419.4 653.5 418.8 665.8 416.2 671.2 C413.8 676.7 411.0 678.1 405.0 682.5 C399.0 686.9 388.8 692.9 380.0 697.5 C371.2 702.1 359.2 707.2 352.5 710.0 C345.8 712.8 342.1 713.8 340.0 714.5" fill="none" stroke="#000" stroke-width="1.12"/>
<path d="M289.0 757.0 L297.0 752.0 L324.5 731.0 L312.0 779.0 L307.0 777.0 L293.0 764.0 Z" fill="#d4cec3" stroke="#000" stroke-width="1.00"/>
<path d="M324.5 731.0 L329.5 731.5 L317.5 780.0 L312.0 779.0 Z" fill="#cec9be" stroke="#000" stroke-width="1.00"/>
<path d="M331.3 489.2 C328.3 491.2 318.6 497.9 313.3 501.7 C308.1 505.4 303.9 508.3 300.0 511.7 C296.1 515.0 294.4 517.5 290.0 521.7 C285.6 525.8 278.9 531.9 273.3 536.7 C267.8 541.4 261.7 545.8 256.7 550.0 C251.7 554.2 247.5 558.6 243.3 561.7 C239.2 564.7 234.7 566.4 231.7 568.3 C228.6 570.3 226.1 572.5 225.0 573.3" fill="none" stroke="#000" stroke-width="1.12"/>
<path d="M225.0 573.3 L201.7 590.0 L204.2 595.0 L215.0 604.2 L215.8 607.0" fill="none" stroke="#000" stroke-width="1.12"/>
<path d="M231.7 520.0 L235.8 519.2 L239.2 534.2 L252.5 541.7 L255.8 557.5 L251.7 560.0 L246.7 557.5 L238.3 553.3 L232.5 535.0 Z" fill="#c8c4b9" stroke="#000" stroke-width="1.00"/>
<path d="M239.2 534.2 L252.5 541.7 L248.3 544.2 L235.8 537.5 Z" fill="#dbd5ca" stroke="#000" stroke-width="1.00"/>
<path d="M248.3 544.2 L251.7 560.0" fill="none" stroke="#000" stroke-width="1.00"/>
<path d="M208.3 548.3 L215.0 540.8 L220.8 536.7 L229.2 562.5 L225.0 566.7 Z" fill="#c8c4b9" stroke="#000" stroke-width="1.00"/>
<path d="M220.8 536.7 L224.2 534.2 L232.5 560.0 L229.2 562.5 Z" fill="#cfc9be" stroke="#000" stroke-width="1.00"/>
<path d="M268.3 499.2 L273.3 495.8 L299.2 511.7 L295.0 521.7 L271.7 508.3 Z" fill="#dbd5ca"/>
<path d="M276.7 496.7 L270.0 496.7 L267.5 501.7 L269.2 506.7 L273.3 510.0" fill="none" stroke="#000" stroke-width="1.00"/>
<path d="M276.7 496.7 L296.7 510.8" fill="none" stroke="#000" stroke-width="1.00"/>
<path d="M273.3 510.0 L291.7 520.8" fill="none" stroke="#000" stroke-width="1.00"/>
<ellipse cx="296.2" cy="516.2" rx="3.7" ry="5.3" transform="rotate(22 296.2 516.2)" fill="#cec9be" stroke="#000" stroke-width="1.12"/>
<path d="M190.0 566.7 L200.0 560.0 L215.0 568.3 L206.7 583.3 L191.7 576.7 Z" fill="#dbd5ca"/>
<path d="M201.7 560.0 L194.2 561.7 L190.8 568.3 L192.0 575.0 L196.7 578.3" fill="none" stroke="#000" stroke-width="1.00"/>
<path d="M201.7 560.0 L211.7 565.0" fill="none" stroke="#000" stroke-width="1.00"/>
<ellipse cx="209.2" cy="574.7" rx="6.3" ry="8.7" transform="rotate(22 209.2 574.7)" fill="#d3cdc2" stroke="#000" stroke-width="1.12"/>
<ellipse cx="209.2" cy="574.7" rx="3.5" ry="4.8" transform="rotate(22 209.2 574.7)" fill="#cec9be" stroke="#000" stroke-width="1.12"/>
<path d="M215.0 577.5 L220.0 573.3 L229.2 580.0 L223.3 591.7 L216.7 586.7 Z" fill="#dbd5ca"/>
<path d="M220.0 573.3 L227.5 578.3" fill="none" stroke="#000" stroke-width="1.00"/>
<path d="M215.8 586.7 L221.7 590.8" fill="none" stroke="#000" stroke-width="1.00"/>
<ellipse cx="224.5" cy="585.3" rx="4.2" ry="5.7" transform="rotate(22 224.5 585.3)" fill="#d3cdc2" stroke="#000" stroke-width="1.12"/>
<ellipse cx="224.5" cy="585.3" rx="2.1" ry="2.8" transform="rotate(22 224.5 585.3)" fill="#cec9be" stroke="#000" stroke-width="1.12"/>
<path d="M220.0 571.7 L225.0 575.0 L231.7 569.2" fill="none" stroke="#000" stroke-width="1.00"/>
<path d="M420.6 341.2 L436.9 330.0 L466.9 330.0 L466.9 347.5 L482.5 352.5 L497.5 370.0 L511.9 370.0 L432.5 416.2 L420.6 420.0 Z" fill="#d5cfc4"/>
<path d="M420.6 341.9 L436.9 330.0 L462.5 342.5 L462.5 345.0 L420.6 367.5 Z" fill="#c8c4b9"/>
<path d="M395.0 358.1 L415.6 344.4 L415.6 371.2 L395.0 362.5 Z" fill="#c8c4b9"/>
<path d="M421.9 373.1 L447.5 359.4 L447.5 380.0 L436.2 374.4 L421.9 381.9 Z" fill="#cec9be"/>
<path d="M437.5 330.0 L462.5 342.5" fill="none" stroke="#000" stroke-width="1.00"/>
<path d="M395.0 362.5 L415.6 371.2" fill="none" stroke="#000" stroke-width="1.00"/>
<path d="M430.0 370.0 L447.5 380.0" fill="none" stroke="#000" stroke-width="1.00"/>
<path d="M420.6 367.5 L462.5 345.0 L462.5 330.0 L466.9 330.0 L466.9 347.5 L420.6 372.5 Z" fill="#d1cbc0" stroke="#000" stroke-width="1.00"/>
<path d="M447.5 358.8 L451.2 356.9 L451.2 378.1 L447.5 380.0 Z" fill="#cfc9be" stroke="#000" stroke-width="1.00"/>
<path d="M466.9 347.5 L467.5 332.5 L476.2 336.2 L476.2 341.2 L482.5 338.1 L482.5 352.5 L487.5 362.5 L497.5 370.0 L497.5 375.0 L477.5 385.0 L461.2 373.8 L451.2 378.1 L451.2 356.9 Z" fill="#d9d3c8"/>
<path d="M467.5 332.5 L476.2 336.2 L476.2 341.2 L497.5 330.0" fill="none" stroke="#000" stroke-width="1.00"/>
<path d="M476.2 336.2 L495.0 327.5" fill="none" stroke="#000" stroke-width="1.00"/>
<path d="M482.5 350.0 L482.5 352.5 L487.5 362.5 L497.5 370.0 L497.5 375.0 L477.5 385.0" fill="none" stroke="#000" stroke-width="1.00"/>
<path d="M482.5 350.0 L507.5 336.2" fill="none" stroke="#000" stroke-width="1.00"/>
<path d="M482.5 346.2 L490.0 342.5" fill="none" stroke="#000" stroke-width="1.00"/>
<ellipse cx="488.1" cy="339.4" rx="3.8" ry="5.6" transform="rotate(25 488.1 339.4)" fill="#d1cbc0" stroke="#000" stroke-width="1.12"/>
<ellipse cx="488.5" cy="339.8" rx="2.2" ry="3.5" transform="rotate(25 488.5 339.8)" fill="#ddd7cc" stroke="#000" stroke-width="1.12"/>
<path d="M420.6 381.9 L449.4 397.5 L467.5 388.1 L453.8 378.1 L436.2 374.4 Z" fill="#d8d2c7" stroke="#000" stroke-width="1.00"/>
<path d="M449.4 397.5 L449.4 403.1 L467.5 393.8 L467.5 388.1 Z" fill="#cec9be" stroke="#000" stroke-width="1.00"/>
<path d="M420.6 381.9 L420.6 387.5 L449.4 403.1 L449.4 397.5 Z" fill="#d1cbc0" stroke="#000" stroke-width="1.00"/>
<path d="M453.1 378.1 L460.6 373.1 L476.2 381.9 L476.2 386.9 L468.1 388.8 L460.0 380.0 Z" fill="#d1cbc0" stroke="#000" stroke-width="1.00"/>
<path d="M460.6 373.1 L461.9 378.8 L475.0 386.9" fill="none" stroke="#000" stroke-width="1.00"/>
<path d="M460.0 380.0 L468.1 385.0 L468.1 388.8" fill="none" stroke="#000" stroke-width="1.00"/>
<path d="M432.5 416.2 L436.2 421.2 L445.0 416.2 L475.0 400.0 L475.0 433.0 L445.0 422.5 Z" fill="#c6c4b9"/>
<path d="M511.9 370.0 L515.6 375.6 L436.2 421.2 L432.5 416.2 Z" fill="#d1cbc0" stroke="#000" stroke-width="1.00"/>
<path d="M436.2 421.2 L437.5 417.5 L443.1 415.0 L443.8 420.0" fill="none" stroke="#000" stroke-width="1.00"/>
<path d="M445.0 422.5 L475.0 433.0" fill="none" stroke="#000" stroke-width="1.00"/>
<path d="M481.2 392.5 L491.9 386.9" fill="none" stroke="#000" stroke-width="1.00"/>
<path d="M481.2 395.0 L492.5 388.8" fill="none" stroke="#000" stroke-width="1.00"/>
<path d="M476.2 388.8 L480.0 386.9 L480.0 433.0 L476.2 433.0 Z" fill="#cfc9be" stroke="#000" stroke-width="1.00"/>
<path d="M415.6 343.8 L420.6 341.2 L420.6 420.0 L415.6 422.5 Z" fill="#d1cbc0" stroke="#000" stroke-width="1.00"/>
<path d="M420.6 387.5 L421.9 388.8 L421.9 411.2 L420.6 412.5" fill="none" stroke="#000" stroke-width="1.00"/>
<path d="M421.9 411.2 L432.5 416.2" fill="none" stroke="#000" stroke-width="1.00"/>
<path d="M395.0 388.8 L402.5 385.0 L415.0 395.0 L407.5 410.0 L395.0 403.8 Z" fill="#dbd5ca"/>
<path d="M395.0 389.4 L401.2 391.2" fill="none" stroke="#000" stroke-width="1.00"/>
<path d="M395.0 411.2 L402.5 407.5" fill="none" stroke="#000" stroke-width="1.00"/>
<ellipse cx="408.1" cy="400.6" rx="5.2" ry="9.0" transform="rotate(22 408.1 400.6)" fill="#d3cdc2" stroke="#000" stroke-width="1.12"/>
<ellipse cx="408.1" cy="400.6" rx="2.9" ry="5.0" transform="rotate(22 408.1 400.6)" fill="#cec9be" stroke="#000" stroke-width="1.12"/>
<path d="M340.0 312.5 C342.0 309.1 347.0 298.8 352.0 292.0 C357.0 285.2 363.3 279.0 370.0 272.0 C376.7 265.0 384.2 257.0 392.0 250.0 C399.8 243.0 408.2 236.0 417.0 230.0 C425.8 224.0 437.0 218.6 445.0 214.0 C453.0 209.4 457.5 206.3 465.0 202.5 C472.5 198.7 481.7 193.9 490.0 191.0 C498.3 188.1 506.7 186.1 515.0 185.0 C523.3 183.9 535.8 184.6 540.0 184.5" fill="none" stroke="#000" stroke-width="1.00"/>
<path d="M540.0 184.5 L552.0 186.5 L562.0 189.5" fill="none" stroke="#000" stroke-width="1.00" opacity="0.5"/>
<path d="M25.0 675.8 C23.1 677.3 16.4 681.5 13.3 685.0 C10.2 688.5 8.2 692.5 6.7 696.7 C5.2 700.9 4.4 705.0 4.5 710.0 C4.6 715.0 5.8 721.4 7.5 726.7 C9.2 732.0 11.8 736.7 15.0 741.7 C18.2 746.7 22.8 752.5 26.7 756.7 C30.6 760.9 35.1 763.2 38.3 766.7 C41.5 770.2 44.7 776.1 46.0 778.0" fill="none" stroke="#000" stroke-width="1.00"/>
<path d="M663.8 406.0 L681.0 397.5" fill="none" stroke="#000" stroke-width="1.00"/>
<path d="M672.0 333.2 L663.5 333.0" fill="none" stroke="#000" stroke-width="0.75"/>
<path d="M597.5 660.0 L602.5 650.0 L617.5 641.2 L635.0 638.8 L652.5 640.0 L665.0 643.8 L665.0 678.8 L645.0 672.5 L625.0 673.8 L607.5 678.8 L600.0 670.0 Z" fill="#c6c4b9"/>
<path d="M647.5 645.0 L665.0 643.8 L665.0 678.8 L647.5 672.5 Z" fill="#cfc9be"/>
<path d="M621.2 645.0 L627.5 643.8 L627.5 673.8 L621.2 675.0 Z" fill="#d3cdc2"/>
<path d="M597.5 660.0 L602.5 650.0 L617.5 641.2 L635.0 638.8 L652.5 640.0 L665.0 643.8 L665.0 678.8" fill="none" stroke="#000" stroke-width="1.00"/>
<path d="M607.5 678.8 L625.0 673.8 L645.0 672.5 L665.0 678.8" fill="none" stroke="#000" stroke-width="1.00"/>
<path d="M600.0 662.5 L605.0 653.8 L617.5 646.2 L621.2 645.0 L621.2 675.0" fill="none" stroke="#000" stroke-width="1.00"/>
<path d="M627.5 643.8 L627.5 673.8" fill="none" stroke="#000" stroke-width="1.00"/>
<path d="M647.5 645.0 L647.5 672.5" fill="none" stroke="#000" stroke-width="1.00"/>
<path d="M627.5 643.8 L647.5 645.0" fill="none" stroke="#000" stroke-width="1.00"/>
<path d="M597.5 660.0 L600.0 670.0 L607.5 678.8 L607.5 706.0" fill="none" stroke="#000" stroke-width="1.00"/>
<path d="M600.0 662.5 L621.2 672.5" fill="none" stroke="#000" stroke-width="1.00"/>
<path d="M627.5 662.5 L647.5 672.5" fill="none" stroke="#000" stroke-width="1.00"/>
<path d="M530.0 440.0 L546.2 440.0 L598.1 470.0 L611.2 480.6 L611.2 440.0 L614.4 440.0 L614.4 458.8 L655.0 440.0 L655.0 472.5 L677.0 477.5 L677.0 543.0 L530.0 543.0 Z" fill="#d3cdc2"/>
<path d="M530.0 440.0 L545.0 440.6 L566.9 462.5 L545.0 488.1 L530.0 480.0 Z" fill="#d3cdc2"/>
<path d="M545.0 440.0 L601.9 440.0 L598.1 470.0 L580.0 465.0 L566.9 462.5 Z" fill="#c6c4b9"/>
<path d="M545.0 440.6 L566.9 462.5" fill="none" stroke="#000" stroke-width="1.00"/>
<path d="M566.9 462.5 L580.0 465.0 L598.1 470.0" fill="none" stroke="#000" stroke-width="1.00"/>
<path d="M530.0 443.1 L545.0 451.2" fill="none" stroke="#000" stroke-width="1.00"/>
<path d="M601.9 440.0 L611.2 440.0 L611.2 480.6 L598.1 470.0 Z" fill="#d3cdc2"/>
<path d="M611.2 440.0 L614.4 440.0 L614.4 480.0 L611.2 480.9 Z" fill="#cfc9be" stroke="#000" stroke-width="1.00"/>
<path d="M601.9 440.0 L598.1 470.0 L611.2 480.9" fill="none" stroke="#000" stroke-width="1.00"/>
<path d="M576.2 468.8 L584.4 471.9 L611.2 481.2 L610.0 483.1 L584.4 473.8 Z" fill="#d6d0c5"/>
<path d="M571.2 472.5 L584.4 471.9 L584.4 488.1 L571.2 480.0 Z" fill="#bfbdb3" stroke="#000" stroke-width="1.00"/>
<path d="M566.2 478.8 L571.2 480.0 L584.4 488.1 L625.0 512.5 L593.1 530.0 L597.5 513.8 L555.6 489.4 Z" fill="#dad4ca"/>
<path d="M566.9 462.5 L576.2 468.8 L555.6 489.4 L545.0 488.1 Z" fill="#d9d3c8" stroke="#000" stroke-width="1.00"/>
<path d="M545.0 488.1 L555.6 489.4 L597.5 513.8 L592.5 530.6 L587.5 538.8 L530.0 507.5 L530.0 480.0 Z" fill="#d3cdc2"/>
<path d="M555.6 489.4 L597.5 513.8 L596.2 516.2 L555.0 491.9 Z" fill="#cdc7bc"/>
<path d="M545.0 488.1 L587.5 538.8" fill="none" stroke="#000" stroke-width="1.00"/>
<path d="M555.6 489.4 L597.5 513.8 L596.2 516.9 L592.5 530.6 L587.5 538.8" fill="none" stroke="#000" stroke-width="1.00"/>
<path d="M555.0 491.5 L595.6 515.6" fill="none" stroke="#000" stroke-width="1.00"/>
<path d="M584.4 488.1 L625.0 512.5" fill="none" stroke="#000" stroke-width="1.00"/>
<path d="M584.4 471.9 L611.2 481.2" fill="none" stroke="#000" stroke-width="1.00"/>
<path d="M593.1 530.0 L625.0 513.1 L625.0 543.0 L621.9 543.0 L621.9 521.2 L593.8 533.1 Z" fill="#cfc9be"/>
<path d="M593.8 533.1 L621.9 521.2 L621.9 543.0 L587.5 543.0 L587.5 538.8 Z" fill="#cac6bb"/>
<path d="M625.0 512.5 L625.0 543.0" fill="none" stroke="#000" stroke-width="1.00"/>
<path d="M621.9 521.2 L621.9 543.0" fill="none" stroke="#000" stroke-width="1.00"/>
<path d="M593.1 530.0 L625.0 513.5" fill="none" stroke="#000" stroke-width="1.00"/>
<path d="M593.8 533.1 L621.9 521.2" fill="none" stroke="#000" stroke-width="1.00"/>
<path d="M530.0 507.5 L546.2 516.9 L530.0 526.2" fill="none" stroke="#000" stroke-width="1.00"/>
<path d="M530.0 529.4 L548.8 518.8 L571.2 543.0" fill="none" stroke="#000" stroke-width="1.00"/>
<path d="M540.0 523.8 L567.5 543.0" fill="none" stroke="#000" stroke-width="1.00"/>
<path d="M614.4 458.8 L655.0 440.0 L655.0 453.8 L662.5 465.0 L677.0 470.0 L677.0 498.8 L616.2 464.4 L614.4 463.1 Z" fill="#d6d0c5"/>
<path d="M614.4 458.8 L655.0 440.0 L655.0 443.5 L614.4 463.1 Z" fill="#cfc9be" stroke="#000" stroke-width="1.00"/>
<path d="M615.0 465.0 L677.0 498.8 L677.0 517.5 L666.2 515.0 L610.0 481.2 Z" fill="#cac6bb"/>
<path d="M635.0 490.0 L642.5 481.2 L677.0 500.0 L677.0 515.0 L666.2 515.0 Z" fill="#dbd5ca"/>
<path d="M616.2 464.4 L677.0 498.8" fill="none" stroke="#000" stroke-width="1.00"/>
<path d="M610.0 481.2 L666.2 515.0" fill="none" stroke="#000" stroke-width="1.00"/>
<path d="M646.9 481.2 L640.0 482.5 L635.0 488.8 L634.4 495.0 L636.9 498.8" fill="none" stroke="#000" stroke-width="1.00"/>
<ellipse cx="671.9" cy="507.5" rx="5.2" ry="8.8" transform="rotate(22 671.9 507.5)" fill="#d3cdc2" stroke="#000" stroke-width="1.12"/>
<ellipse cx="671.9" cy="507.5" rx="2.6" ry="4.4" transform="rotate(22 671.9 507.5)" fill="#cec9be" stroke="#000" stroke-width="1.12"/>
<path d="M625.0 517.5 L677.0 543.0 L625.0 543.0 Z" fill="#d6d0c5"/>
<path d="M625.0 517.5 L677.0 543.0" fill="none" stroke="#000" stroke-width="1.00"/>
<path d="M626.2 526.2 L661.2 543.0" fill="none" stroke="#000" stroke-width="1.00"/>
<path d="M662.5 265.0 C662.7 287.5 663.3 369.8 663.5 400.0 C663.7 430.2 663.4 437.2 663.8 446.0 C664.1 454.8 664.5 450.9 665.5 453.0 C666.5 455.1 667.6 457.5 670.0 458.5 C672.4 459.5 665.0 464.0 680.0 459.2 C695.0 454.4 729.0 441.1 760.0 429.8 C791.0 418.4 848.3 397.5 866.0 391.0 L868.7 398.3 C851.0 404.8 793.8 426.0 762.8 437.4 C731.8 448.9 698.6 462.4 682.6 467.2 C666.5 472.0 670.8 468.0 666.7 466.2 C662.6 464.5 660.0 460.0 658.2 456.7 C656.4 453.3 656.3 455.7 656.0 446.3 C655.6 436.9 656.2 430.3 656.1 400.1 C655.9 369.8 655.3 287.6 655.1 265.1 Z" fill="#c4c1b6"/>
<path d="M662.5 265.0 C662.7 287.5 663.3 369.8 663.5 400.0 C663.7 430.2 663.4 437.2 663.8 446.0 C664.1 454.8 664.5 450.9 665.5 453.0 C666.5 455.1 667.6 457.5 670.0 458.5 C672.4 459.5 665.0 464.0 680.0 459.2 C695.0 454.4 729.0 441.1 760.0 429.8 C791.0 418.4 848.3 397.5 866.0 391.0" fill="none" stroke="#000" stroke-width="1.06"/>
<path d="M660.0 265.0 C660.2 287.5 660.8 369.8 661.0 400.0 C661.2 430.2 660.8 437.1 661.2 446.1 C661.5 455.1 661.8 451.7 663.1 454.2 C664.3 456.7 665.9 459.8 668.9 461.1 C671.9 462.3 665.5 466.7 680.9 461.9 C696.2 457.1 729.9 443.7 760.9 432.3 C791.9 420.9 849.2 399.9 866.9 393.4" fill="none" stroke="#000" stroke-width="1.06"/>
<path d="M657.6 265.0 C657.7 287.5 658.4 369.8 658.6 400.0 C658.7 430.2 658.2 437.0 658.6 446.2 C658.9 455.4 659.1 452.5 660.6 455.4 C662.2 458.3 664.3 462.1 667.8 463.6 C671.3 465.2 666.0 469.3 681.7 464.5 C697.4 459.7 730.9 446.3 761.9 434.9 C792.9 423.4 850.1 402.4 867.8 395.9" fill="none" stroke="#000" stroke-width="1.06"/>
<path d="M655.1 265.1 C655.3 287.6 655.9 369.8 656.1 400.1 C656.2 430.3 655.6 436.9 656.0 446.3 C656.3 455.7 656.4 453.3 658.2 456.7 C660.0 460.0 662.6 464.5 666.7 466.2 C670.8 468.0 666.5 472.0 682.6 467.2 C698.6 462.4 731.8 448.9 762.8 437.4 C793.8 426.0 851.0 404.8 868.7 398.3" fill="none" stroke="#000" stroke-width="1.06"/>
<path d="M680.0 473.3 L703.3 464.2 L715.0 473.3 L706.7 486.7 Z" fill="#d3cdc2"/>
<ellipse cx="703.3" cy="475.8" rx="8.7" ry="11.7" transform="rotate(22 703.3 475.8)" fill="#d3cdc2" stroke="#000" stroke-width="1.12"/>
<ellipse cx="703.3" cy="475.8" rx="3.9" ry="5.2" transform="rotate(22 703.3 475.8)" fill="#cec9be" stroke="#000" stroke-width="1.12"/>
<path d="M675.8 471.7 L680.0 470.0 L680.0 537.7 L675.8 537.7 Z" fill="#cfc9be" stroke="#000" stroke-width="1.00"/>
<path d="M645.0 315.0 L673.3 333.3 L663.3 349.2 L640.0 334.2 L635.0 323.3 Z" fill="#dbd5ca"/>
<path d="M645.0 315.0 L673.3 333.3" fill="none" stroke="#000" stroke-width="1.00"/>
<path d="M640.0 334.7 L663.3 349.2" fill="none" stroke="#000" stroke-width="1.00"/>
<path d="M645.0 315.0 C643.9 315.6 640.1 316.4 638.3 318.3 C636.5 320.3 634.6 324.2 634.2 326.7 C633.8 329.2 634.9 331.9 635.8 333.3 C636.8 334.7 639.3 334.7 640.0 335.0" fill="none" stroke="#000" stroke-width="1.00"/>
<ellipse cx="670.0" cy="341.7" rx="6.0" ry="8.3" transform="rotate(22 670.0 341.7)" fill="#d3cdc2" stroke="#000" stroke-width="1.12"/>
<ellipse cx="670.0" cy="341.7" rx="3.0" ry="4.2" transform="rotate(22 670.0 341.7)" fill="#cec9be" stroke="#000" stroke-width="1.12"/>
<defs><clipPath id="csil"><path d="M46.0 779.0 C44.5 777.0 40.5 771.0 37.0 767.0 C33.5 763.0 29.2 760.0 25.0 755.0 C20.8 750.0 15.2 742.8 12.0 737.0 C8.8 731.2 6.6 724.3 5.5 720.0 C4.4 715.7 5.2 714.3 5.5 711.0 C5.8 707.7 6.1 704.0 7.5 700.0 C8.9 696.0 10.8 691.0 14.0 687.0 C17.2 683.0 22.3 679.2 27.0 676.0 C31.7 672.8 36.8 671.2 42.0 668.0 C47.2 664.8 53.8 660.8 58.0 657.0 C62.2 653.2 63.0 651.2 67.0 645.0 C71.0 638.8 76.5 627.5 82.0 620.0 C87.5 612.5 85.8 615.5 100.0 600.0 C114.2 584.5 144.5 551.5 167.0 527.0 C189.5 502.5 217.5 472.0 235.0 453.0 C252.5 434.0 261.7 425.8 272.0 413.0 C282.3 400.2 290.7 385.7 297.0 376.0 C303.3 366.3 305.3 362.3 310.0 355.0 C314.7 347.7 320.0 339.2 325.0 332.0 C330.0 324.8 335.5 318.7 340.0 312.0 C344.5 305.3 347.0 298.7 352.0 292.0 C357.0 285.3 363.3 279.0 370.0 272.0 C376.7 265.0 384.2 257.0 392.0 250.0 C399.8 243.0 408.2 236.0 417.0 230.0 C425.8 224.0 437.0 218.6 445.0 214.0 C453.0 209.4 457.5 206.3 465.0 202.5 C472.5 198.7 481.7 193.9 490.0 191.0 C498.3 188.1 506.7 186.1 515.0 185.0 C523.3 183.9 531.7 183.5 540.0 184.5 C548.3 185.5 556.7 188.2 565.0 191.0 C573.3 193.8 581.7 197.2 590.0 201.0 C598.3 204.8 607.5 210.4 615.0 214.0 C622.5 217.6 629.7 220.2 635.0 222.5 C640.3 224.8 643.5 225.4 647.0 227.5 C650.5 229.6 653.7 231.2 656.0 235.0 C658.3 238.8 659.9 243.0 661.0 250.0 C662.1 257.0 662.1 263.2 662.5 277.0 C662.9 290.8 663.3 323.7 663.5 333.0 L672.0 333.0 L677.0 341.0 L672.0 350.0 L663.5 350.0 L663.8 406.0 L681.0 397.5 L681.0 380.0 L880.0 380.0 L866.0 402.0 L867.0 408.5 L845.0 418.5 C846.0 419.8 849.6 422.9 851.0 426.0 C852.4 429.1 853.7 433.5 853.5 437.0 C853.3 440.5 851.8 444.3 850.0 447.0 C848.2 449.7 845.0 451.5 843.0 453.0 C841.0 454.5 838.8 455.5 838.0 456.0 C838.0 457.5 837.5 462.6 838.0 465.0 C838.5 467.4 839.6 468.8 841.0 470.5 C842.4 472.2 845.6 474.7 846.5 475.5 L907.0 510.5 L907.5 518.0 L688.0 667.5 C683.8 669.6 673.9 673.6 663.0 680.0 C652.1 686.4 635.0 697.7 622.5 706.0 C610.0 714.3 596.1 724.3 588.0 730.0 C579.9 735.7 581.7 735.0 574.0 740.0 C566.3 745.0 551.5 754.3 542.0 760.0 C532.5 765.7 525.3 769.8 517.0 774.0 C508.7 778.2 500.3 782.2 492.0 785.0 C483.7 787.8 475.7 789.6 467.0 790.5 C458.3 791.4 444.5 790.5 440.0 790.5 L430.0 786.0 C417.5 786.3 380.0 787.3 355.0 788.0 C330.0 788.7 301.7 789.0 280.0 790.0 C258.3 791.0 242.5 793.2 225.0 794.0 C207.5 794.8 190.0 795.2 175.0 795.0 C160.0 794.8 146.3 794.0 135.0 792.5 C123.7 791.0 115.3 788.5 107.0 786.0 C98.7 783.5 91.2 780.2 85.0 777.5 C78.8 774.8 74.7 771.1 70.0 770.0 C65.3 768.9 61.0 769.5 57.0 771.0 C53.0 772.5 47.8 777.7 46.0 779.0 Z"/></clipPath><filter id="blur6" x="-20%" y="-20%" width="140%" height="140%"><feGaussianBlur stdDeviation="5"/></filter></defs>
<g clip-path="url(#csil)"><path d="M548.0 180.0 C550.8 181.0 558.0 183.3 565.0 186.0 C572.0 188.7 581.7 192.2 590.0 196.0 C598.3 199.8 607.5 205.3 615.0 209.0 C622.5 212.7 629.2 215.5 635.0 218.0 C640.8 220.5 647.5 223.0 650.0 224.0" fill="none" stroke="#b9b6aa" stroke-width="14" opacity="0.55" filter="url(#blur6)"/></g>
<g clip-path="url(#csil)"><path d="M100.0 596.0 C111.2 583.8 144.5 547.5 167.0 523.0 C189.5 498.5 217.5 468.0 235.0 449.0 C252.5 430.0 261.7 421.8 272.0 409.0 C282.3 396.2 288.2 385.5 297.0 372.0 C305.8 358.5 315.8 342.0 325.0 328.0 C334.2 314.0 347.5 294.7 352.0 288.0" fill="none" stroke="#c2bfb3" stroke-width="10" opacity="0.5" filter="url(#blur6)"/></g>
<ellipse cx="638.0" cy="550.0" rx="10.0" ry="13.8" transform="rotate(22 638.0 550.0)" fill="#d3cdc2" stroke="#000" stroke-width="1.12"/>
<ellipse cx="638.0" cy="550.0" rx="4.5" ry="6.2" transform="rotate(22 638.0 550.0)" fill="#cec9be" stroke="#000" stroke-width="1.12"/>
<path d="M540.0 440.0 L834.0 440.0 L834.0 560.0 L712.5 646.0 L540.0 646.0 Z" fill="#d6d0c5"/>
<path d="M540.0 440.0 L547.5 440.0 L566.2 463.8 L545.0 487.5 L540.0 490.0 Z" fill="#d3cdc2"/>
<path d="M547.5 440.0 L601.2 440.0 L598.8 466.2 L580.0 465.0 L566.2 463.8 Z" fill="#c6c4b9"/>
<path d="M543.8 440.0 L566.2 463.8" fill="none" stroke="#000" stroke-width="1.00"/>
<path d="M566.2 463.8 C568.5 464.0 574.6 464.6 580.0 465.0 C585.4 465.4 595.6 466.0 598.8 466.2" fill="none" stroke="#000" stroke-width="1.00"/>
<path d="M601.2 440.0 L611.2 440.0 L611.2 481.2 L598.8 466.2 Z" fill="#d3cdc2"/>
<path d="M611.2 440.0 L615.0 440.0 L615.0 480.0 L611.2 481.2 Z" fill="#cfc9be" stroke="#000" stroke-width="1.00"/>
<path d="M601.2 440.0 L598.8 466.2 L611.2 481.2" fill="none" stroke="#000" stroke-width="1.00"/>
<path d="M575.0 469.5 L585.0 472.0 L611.2 481.2 L611.2 483.8 L585.0 473.8 Z" fill="#d6d0c5"/>
<path d="M571.2 472.5 L585.0 472.0 L585.0 487.5 L571.2 480.0 Z" fill="#bfbdb3" stroke="#000" stroke-width="1.00"/>
<path d="M567.5 478.8 L571.2 480.0 L585.0 487.5 L625.0 512.5 L593.8 530.0 L597.5 513.8 L555.5 490.0 Z" fill="#dad4ca"/>
<path d="M566.2 463.8 L575.0 469.5 L555.5 490.0 L545.0 487.5 Z" fill="#d9d3c8" stroke="#000" stroke-width="1.00"/>
<path d="M545.0 487.5 L555.5 490.0 L597.5 513.8 L593.8 530.0 L587.5 538.8 L540.0 512.5 L540.0 490.0 Z" fill="#d3cdc2"/>
<path d="M555.5 490.0 L597.5 513.8 L596.5 516.2 L555.0 492.0 Z" fill="#cdc7bc"/>
<path d="M545.0 487.5 L587.5 538.8" fill="none" stroke="#000" stroke-width="1.00"/>
<path d="M555.5 490.0 L597.5 513.8 L593.8 530.0 L587.5 538.8" fill="none" stroke="#000" stroke-width="1.00"/>
<path d="M555.0 492.0 L596.0 515.8" fill="none" stroke="#000" stroke-width="1.00"/>
<path d="M585.0 487.5 L625.0 512.5" fill="none" stroke="#000" stroke-width="1.00"/>
<path d="M585.0 472.0 L611.2 481.2" fill="none" stroke="#000" stroke-width="1.00"/>
<path d="M540.0 512.5 L587.5 538.8 L593.8 533.8 L621.2 521.2 L621.2 571.2 L552.5 612.5 L540.0 606.2 Z" fill="#d8d2c7"/>
<path d="M593.8 530.0 L625.0 513.2 L625.0 570.0 L621.2 571.8 L621.2 521.2 L593.8 534.2 Z" fill="#cfc9be" stroke="#000" stroke-width="1.00"/>
<path d="M540.0 606.2 L552.5 612.5 L626.2 572.5 L626.2 576.2 L552.5 615.5 L540.0 609.5 Z" fill="#cdc7bc" stroke="#000" stroke-width="1.00"/>
<path d="M552.5 612.5 L552.5 615.5" fill="none" stroke="#000" stroke-width="1.00"/>
<path d="M540.0 512.5 L545.0 515.0" fill="none" stroke="#000" stroke-width="1.00"/>
<path d="M615.0 440.0 L657.5 440.0 L662.5 455.0 L670.0 463.8 L677.0 466.2 L677.0 546.2 L625.0 522.5 L625.0 513.2 L615.0 506.2 Z" fill="#cec9be"/>
<path d="M615.0 450.0 L657.5 440.0 L657.5 442.5 L615.0 457.5 Z" fill="#cfc9be" stroke="#000" stroke-width="1.00"/>
<path d="M617.5 461.2 L676.2 498.8 L666.2 515.0 L615.0 481.2 Z" fill="#cdc7bc"/>
<path d="M635.0 492.5 L643.8 481.2 L677.0 499.5 L666.2 515.0 L638.8 501.2 Z" fill="#dbd5ca"/>
<path d="M617.5 461.2 L676.2 498.8" fill="none" stroke="#000" stroke-width="1.00"/>
<path d="M615.0 481.2 L666.2 515.0" fill="none" stroke="#000" stroke-width="1.00"/>
<path d="M644.5 481.2 C643.3 481.7 639.2 481.9 637.5 483.8 C635.8 485.6 634.7 489.8 634.5 492.5 C634.3 495.2 635.3 498.3 636.2 500.0 C637.2 501.7 639.4 502.1 640.0 502.5" fill="none" stroke="#000" stroke-width="1.00"/>
<ellipse cx="671.2" cy="507.0" rx="6.2" ry="9.0" transform="rotate(22 671.2 507.0)" fill="#d3cdc2" stroke="#000" stroke-width="1.12"/>
<ellipse cx="671.2" cy="507.0" rx="3.1" ry="4.5" transform="rotate(22 671.2 507.0)" fill="#cec9be" stroke="#000" stroke-width="1.12"/>
<path d="M625.0 523.8 L676.2 547.0 L685.0 542.0 L685.0 577.0 L671.2 570.0 L642.5 586.2 L625.0 588.0 L626.2 576.2 Z" fill="#d3cdc2"/>
<path d="M677.0 470.0 L679.5 472.0 L679.5 531.2 L689.5 537.0 L689.5 576.2 L685.0 577.5 L685.0 541.2 L677.0 546.2 Z" fill="#cfc9be" stroke="#000" stroke-width="1.00"/>
<path d="M677.0 546.2 L625.0 523.2" fill="none" stroke="#000" stroke-width="1.00"/>
<path d="M679.5 531.2 L685.0 541.2" fill="none" stroke="#000" stroke-width="1.00"/>
<ellipse cx="638.2" cy="549.5" rx="10.0" ry="13.8" transform="rotate(22 638.2 549.5)" fill="#d3cdc2" stroke="#000" stroke-width="1.12"/>
<ellipse cx="638.2" cy="549.5" rx="4.5" ry="6.2" transform="rotate(22 638.2 549.5)" fill="#cec9be" stroke="#000" stroke-width="1.12"/>
<path d="M540.0 640.0 L550.0 637.5 L605.0 607.5 L605.5 600.0 L612.5 592.5 L625.0 588.0 L642.5 586.2 L671.2 570.0 L685.0 577.5 L632.5 623.8 L540.0 646.0 Z" fill="#d9d3c8"/>
<path d="M605.5 600.0 L612.5 592.5 L620.0 605.0 L636.2 618.8 L632.5 623.8 L605.0 607.5 Z" fill="#d0cabf"/>
<path d="M540.0 640.0 L550.0 637.5 L605.0 607.5 L605.5 600.0 L612.5 592.5 L625.0 588.0 L642.5 586.2 L671.2 570.0 L685.0 577.5 L689.5 576.2" fill="none" stroke="#000" stroke-width="1.00"/>
<path d="M612.5 592.5 C613.8 594.6 616.0 600.6 620.0 605.0 C624.0 609.4 633.5 616.5 636.2 618.8" fill="none" stroke="#000" stroke-width="1.00"/>
<path d="M605.0 607.5 L632.5 623.8" fill="none" stroke="#000" stroke-width="1.00"/>
<path d="M642.5 586.2 L643.8 589.5 L672.5 573.2" fill="none" stroke="#000" stroke-width="1.00"/>
<path d="M540.0 643.8 L547.5 646.0" fill="none" stroke="#000" stroke-width="1.00"/>
<path d="M689.5 537.0 L752.5 496.2 L834.0 455.0 L834.0 560.0 L712.5 646.0 L632.5 623.8 L689.5 576.2 Z" fill="#d6d0c5"/>
<path d="M689.5 537.5 L752.5 497.0 L834.0 455.5 L834.0 483.0 L689.5 576.2 Z" fill="#d1cbc0"/>
<path d="M632.5 623.8 L689.5 576.2 L834.0 483.0" fill="none" stroke="#000" stroke-width="1.00"/>
<path d="M636.2 618.8 L665.0 637.5" fill="none" stroke="#000" stroke-width="1.00"/>
<path d="M679.5 472.0 L760.0 440.0 L834.0 440.0 L834.0 455.5 L752.5 496.2 L682.5 529.2 L679.5 531.2 Z" fill="#c8c4b9"/>
<path d="M682.5 529.2 L752.5 496.2 L834.0 455.5" fill="none" stroke="#000" stroke-width="1.00"/>
<path d="M801.9 426.6 L813.8 434.8 L743.8 474.0 L735.0 468.0 L765.0 435.0 Z" fill="#d8d2c7"/>
<path d="M813.8 434.8 L813.8 438.8 L743.8 478.0 L743.8 474.0 Z" fill="#cec9be" stroke="#000" stroke-width="1.00"/>
<path d="M801.9 426.6 L813.8 434.8" fill="none" stroke="#000" stroke-width="1.00"/>
<path d="M607.5 646.0 L622.5 640.0 L640.0 638.8 L657.5 641.2 L665.0 646.0 Z" fill="#c6c4b9"/>
<path d="M607.5 646.0 C610.0 645.0 617.1 641.2 622.5 640.0 C627.9 638.8 634.2 638.5 640.0 638.8 C645.8 639.0 653.3 640.0 657.5 641.2 C661.7 642.5 663.8 645.2 665.0 646.0" fill="none" stroke="#000" stroke-width="1.00"/>
<path d="M907.5 518.0 L687.5 667.5 L665.0 678.8 L622.5 706.0 L588.0 730.0 L584.8 725.4 L619.4 701.3 L662.1 673.9 L684.4 662.8 L904.4 513.4 Z" fill="#ccc7bc"/>
<path d="M907.5 518.0 L687.5 667.5 L665.0 678.8 L622.5 706.0 L588.0 730.0" fill="none" stroke="#111" stroke-width="0.88"/>
<path d="M906.6 516.7 L686.6 666.2 L664.2 677.4 L621.6 704.7 L587.1 728.7" fill="none" stroke="#111" stroke-width="0.88"/>
<path d="M905.8 515.5 L685.8 665.0 L663.5 676.2 L620.8 703.5 L586.3 727.5" fill="none" stroke="#111" stroke-width="0.88"/>
<path d="M905.1 514.4 L685.1 663.9 L662.8 675.1 L620.1 702.4 L585.5 726.5" fill="none" stroke="#111" stroke-width="0.88"/>
<path d="M904.4 513.4 L684.4 662.8 L662.1 673.9 L619.4 701.3 L584.8 725.4" fill="none" stroke="#111" stroke-width="0.88"/>
<path d="M662.5 265.0 C662.7 287.5 663.3 369.8 663.5 400.0 C663.7 430.2 663.4 437.2 663.8 446.0 C664.1 454.8 664.5 450.9 665.5 453.0 C666.5 455.1 667.6 457.5 670.0 458.5 C672.4 459.5 665.0 464.0 680.0 459.2 C695.0 454.4 729.0 441.1 760.0 429.8 C791.0 418.4 848.3 397.5 866.0 391.0 L868.7 398.3 C851.0 404.8 793.8 426.0 762.8 437.4 C731.8 448.9 698.6 462.4 682.6 467.2 C666.5 472.0 670.8 468.0 666.7 466.2 C662.6 464.5 660.0 460.0 658.2 456.7 C656.4 453.3 656.3 455.7 656.0 446.3 C655.6 436.9 656.2 430.3 656.1 400.1 C655.9 369.8 655.3 287.6 655.1 265.1 Z" fill="#c4c1b6"/>
<path d="M662.5 265.0 C662.7 287.5 663.3 369.8 663.5 400.0 C663.7 430.2 663.4 437.2 663.8 446.0 C664.1 454.8 664.5 450.9 665.5 453.0 C666.5 455.1 667.6 457.5 670.0 458.5 C672.4 459.5 665.0 464.0 680.0 459.2 C695.0 454.4 729.0 441.1 760.0 429.8 C791.0 418.4 848.3 397.5 866.0 391.0" fill="none" stroke="#000" stroke-width="1.06"/>
<path d="M660.0 265.0 C660.2 287.5 660.8 369.8 661.0 400.0 C661.2 430.2 660.8 437.1 661.2 446.1 C661.5 455.1 661.8 451.7 663.1 454.2 C664.3 456.7 665.9 459.8 668.9 461.1 C671.9 462.3 665.5 466.7 680.9 461.9 C696.2 457.1 729.9 443.7 760.9 432.3 C791.9 420.9 849.2 399.9 866.9 393.4" fill="none" stroke="#000" stroke-width="1.06"/>
<path d="M657.6 265.0 C657.7 287.5 658.4 369.8 658.6 400.0 C658.7 430.2 658.2 437.0 658.6 446.2 C658.9 455.4 659.1 452.5 660.6 455.4 C662.2 458.3 664.3 462.1 667.8 463.6 C671.3 465.2 666.0 469.3 681.7 464.5 C697.4 459.7 730.9 446.3 761.9 434.9 C792.9 423.4 850.1 402.4 867.8 395.9" fill="none" stroke="#000" stroke-width="1.06"/>
<path d="M655.1 265.1 C655.3 287.6 655.9 369.8 656.1 400.1 C656.2 430.3 655.6 436.9 656.0 446.3 C656.3 455.7 656.4 453.3 658.2 456.7 C660.0 460.0 662.6 464.5 666.7 466.2 C670.8 468.0 666.5 472.0 682.6 467.2 C698.6 462.4 731.8 448.9 762.8 437.4 C793.8 426.0 851.0 404.8 868.7 398.3" fill="none" stroke="#000" stroke-width="1.06"/>
<path d="M723.8 455.0 L727.5 453.8 L727.5 472.5 L723.8 474.5 Z" fill="#cfc9be" stroke="#000" stroke-width="1.00"/>
<path d="M715.0 467.5 L723.8 474.5" fill="none" stroke="#000" stroke-width="1.00"/>
<path d="M680.0 465.0 L700.0 463.8 L712.5 475.0 L695.0 486.2 Z" fill="#d3cdc2"/>
<ellipse cx="703.8" cy="475.8" rx="8.8" ry="11.5" transform="rotate(22 703.8 475.8)" fill="#d3cdc2" stroke="#000" stroke-width="1.12"/>
<ellipse cx="703.8" cy="475.8" rx="3.5" ry="4.6" transform="rotate(22 703.8 475.8)" fill="#cec9be" stroke="#000" stroke-width="1.12"/>
<path d="M712.5 480.0 L727.5 469.5 L752.5 487.5 L740.0 511.2 L712.5 498.0 Z" fill="#dad4c9"/>
<path d="M727.5 469.5 L748.0 483.8" fill="none" stroke="#000" stroke-width="1.00"/>
<path d="M712.5 498.0 L735.0 510.5" fill="none" stroke="#000" stroke-width="1.00"/>
<ellipse cx="743.0" cy="497.5" rx="10.5" ry="14.2" transform="rotate(22 743.0 497.5)" fill="#d3cdc2" stroke="#000" stroke-width="1.12"/>
<ellipse cx="743.0" cy="497.5" rx="5.8" ry="7.8" transform="rotate(22 743.0 497.5)" fill="#cec9be" stroke="#000" stroke-width="1.12"/>
<path d="M597.5 660.0 L602.5 650.0 L617.5 641.2 L635.0 638.8 L652.5 640.0 L665.0 643.8 L665.0 678.8 L645.0 672.5 L625.0 673.8 L607.5 678.8 L600.0 670.0 Z" fill="#c6c4b9"/>
<path d="M647.5 645.0 L665.0 643.8 L665.0 678.8 L647.5 672.5 Z" fill="#cfc9be"/>
<path d="M621.2 645.0 L627.5 643.8 L627.5 673.8 L621.2 675.0 Z" fill="#d3cdc2"/>
<path d="M597.5 660.0 L602.5 650.0 L617.5 641.2 L635.0 638.8 L652.5 640.0 L665.0 643.8 L665.0 678.8" fill="none" stroke="#000" stroke-width="1.00"/>
<path d="M607.5 678.8 L625.0 673.8 L645.0 672.5 L665.0 678.8" fill="none" stroke="#000" stroke-width="1.00"/>
<path d="M600.0 662.5 L605.0 653.8 L617.5 646.2 L621.2 645.0 L621.2 675.0" fill="none" stroke="#000" stroke-width="1.00"/>
<path d="M627.5 643.8 L627.5 673.8" fill="none" stroke="#000" stroke-width="1.00"/>
<path d="M647.5 645.0 L647.5 672.5" fill="none" stroke="#000" stroke-width="1.00"/>
<path d="M627.5 643.8 L647.5 645.0" fill="none" stroke="#000" stroke-width="1.00"/>
<path d="M597.5 660.0 L600.0 670.0 L607.5 678.8 L607.5 706.0" fill="none" stroke="#000" stroke-width="1.00"/>
<path d="M600.0 662.5 L621.2 672.5" fill="none" stroke="#000" stroke-width="1.00"/>
<path d="M627.5 662.5 L647.5 672.5" fill="none" stroke="#000" stroke-width="1.00"/>
<path d="M492.5 485.0 L540.0 512.5 L587.5 538.8" fill="none" stroke="#000" stroke-width="1.00"/>
<path d="M547.5 521.2 L621.2 566.2" fill="none" stroke="#000" stroke-width="1.00"/>
<path d="M530.0 523.5 L543.2 516.8 L548.2 519.2 L530.0 528.8 Z" fill="#cfc9be" stroke="#000" stroke-width="1.00"/>
<path d="M813.8 427.2 L835.0 416.6 L852.5 427.2 L835.0 452.2 L813.8 442.2 Z" fill="#dad4c9"/>
<path d="M835.0 416.6 L847.5 424.1" fill="none" stroke="#000" stroke-width="1.00"/>
<path d="M813.8 442.2 L833.8 451.6" fill="none" stroke="#000" stroke-width="1.00"/>
<path d="M801.9 426.6 L813.8 434.8 L813.8 438.8" fill="none" stroke="#000" stroke-width="1.00"/>
<ellipse cx="842.5" cy="439.1" rx="10.6" ry="14.4" transform="rotate(22 842.5 439.1)" fill="#d3cdc2" stroke="#000" stroke-width="1.12"/>
<ellipse cx="842.5" cy="439.1" rx="6.2" ry="8.3" transform="rotate(22 842.5 439.1)" fill="#cec9be" stroke="#000" stroke-width="1.12"/>
<path d="M836.2 452.9 L836.2 461.0" fill="none" stroke="#000" stroke-width="1.00"/>
<path d="M838.5 453.5 L838.5 460.4" fill="none" stroke="#000" stroke-width="1.00"/>
</svg>
<div id="dlg">
<div id="ttl"></div>
<svg class="i" style="left:5px;top:6.5px" width="10" height="10" viewBox="0 0 10 10"><circle cx="5" cy="5" r="4.6" fill="#222"/><rect x="2.3" y="4.2" width="5.4" height="1.6" fill="#f3f3f3"/></svg>
<div id="sel"></div>
<svg class="i" style="left:177px;top:32px" width="10" height="15" viewBox="0 0 10 15"><path d="M1 0.8 L1 11.6 L3.7 9.2 L5.6 13.6 L7.4 12.8 L5.5 8.6 L9 8.4 Z" fill="#fff" stroke="#333" stroke-width="1" stroke-linejoin="round"/></svg>
<svg class="i" style="left:175px;top:63.5px" width="9" height="6" viewBox="0 0 9 6"><path d="M0.8 0.8 L4.5 4.5 L8.2 0.8" fill="none" stroke="#2b2b2b" stroke-width="1.6"/></svg>
<svg class="i" style="left:194px;top:58px" width="13" height="15.5" viewBox="0 0 13 15.5"><path d="M0 0 H7.6 V5.4 H13 V15.5 H0 Z M8.8 0 L13 4.2 H8.8 Z" fill="#4a4a4a"/></svg>
<svg class="i" style="left:197px;top:80px" width="6" height="9" viewBox="0 0 6 9"><path d="M0.8 0.8 L4.5 4.5 L0.8 8.2" fill="none" stroke="#9c9c9c" stroke-width="1.6"/></svg>
<svg class="i" style="left:175px;top:100px" width="9" height="6" viewBox="0 0 9 6"><path d="M0.8 0.8 L4.5 4.5 L8.2 0.8" fill="none" stroke="#2b2b2b" stroke-width="1.6"/></svg>
<svg class="i" style="left:193px;top:97px" width="16" height="12" viewBox="0 0 16 12"><path d="M0 1.5 H6 L7.3 0 H16 V12 H0 Z" fill="#4a4a4a"/><rect x="0.6" y="2.6" width="6.4" height="0.9" fill="#e8e8e8"/></svg>
<div id="hl"></div>
<svg class="i" style="left:195px;top:118px" width="9" height="6" viewBox="0 0 9 6"><path d="M0.8 0.8 L4.5 4.5 L8.2 0.8" fill="none" stroke="#2b2b2b" stroke-width="1.6"/></svg>
<svg class="i" style="left:197px;top:262.2px" width="6" height="9" viewBox="0 0 6 9"><path d="M0.8 0.8 L4.5 4.5 L0.8 8.2" fill="none" stroke="#9c9c9c" stroke-width="1.6"/></svg>
<svg class="i" style="left:197px;top:279.2px" width="6" height="9" viewBox="0 0 6 9"><path d="M0.8 0.8 L4.5 4.5 L0.8 8.2" fill="none" stroke="#9c9c9c" stroke-width="1.6"/></svg>
<svg class="i" style="left:197px;top:296.2px" width="6" height="9" viewBox="0 0 6 9"><path d="M0.8 0.8 L4.5 4.5 L0.8 8.2" fill="none" stroke="#9c9c9c" stroke-width="1.6"/></svg>
<svg class="i" style="left:197px;top:313.2px" width="6" height="9" viewBox="0 0 6 9"><path d="M0.8 0.8 L4.5 4.5 L0.8 8.2" fill="none" stroke="#9c9c9c" stroke-width="1.6"/></svg>
<svg class="i" style="left:197px;top:330.2px" width="6" height="9" viewBox="0 0 6 9"><path d="M0.8 0.8 L4.5 4.5 L0.8 8.2" fill="none" stroke="#9c9c9c" stroke-width="1.6"/></svg>
<div id="sep"></div>
<svg class="i" style="left:9px;top:375.5px" width="11" height="11" viewBox="0 0 11 11"><circle cx="5.5" cy="5.5" r="5.2" fill="#111"/><rect x="4.6" y="4.7" width="1.9" height="3.9" fill="#fff"/><circle cx="5.5" cy="2.9" r="1.1" fill="#fff"/></svg>
<div class="btn" style="left:349px;color:#b9b9b9;border-color:#bfbfbf"><span>OK</span></div>
<div class="btn" style="left:419px"><span>Annuler</span></div>
<svg id="txt" width="490" height="398">
<text x="24.5" y="15.2" textLength="252" lengthAdjust="spacingAndGlyphs" style="fill:#5c5c5c">AFFECTER UNE RÈGLE DE CONCEPTION PLASTIQUE</text>
<text x="12.0" y="43.2" textLength="54" lengthAdjust="spacingAndGlyphs">Composant</text>
<text x="191.5" y="43.2" textLength="59.5" lengthAdjust="spacingAndGlyphs" style="fill:#fff">Sélectionner</text>
<text x="12.0" y="73.2" textLength="143" lengthAdjust="spacingAndGlyphs">Règle de conception plastique</text>
<text x="215.5" y="69.5" textLength="107" lengthAdjust="spacingAndGlyphs">Dans cette conception</text>
<text x="213.0" y="87.7" class="b" textLength="72.5" lengthAdjust="spacingAndGlyphs">ABS (1,5 mm)</text>
<text x="215.5" y="106.5" textLength="57" lengthAdjust="spacingAndGlyphs">Bibliothèque</text>
<text x="213.0" y="124.7" class="b" textLength="140" lengthAdjust="spacingAndGlyphs" style="fill:#fff">ABS (1,5 mm) (Par défaut)</text>
<text x="233.5" y="141.2" textLength="87.2" lengthAdjust="spacingAndGlyphs">Matériau physique</text>
<text x="373.7" y="141.2" textLength="65.9" lengthAdjust="spacingAndGlyphs">Plastique ABS</text>
<text x="233.5" y="157.2" textLength="107" lengthAdjust="spacingAndGlyphs">Intervalle d'épaisseurs</text>
<text x="373.7" y="157.2" textLength="64.3" lengthAdjust="spacingAndGlyphs">1.20-3.50 mm</text>
<text x="233.5" y="173.3" textLength="47.3" lengthAdjust="spacingAndGlyphs">Épaisseur</text>
<text x="373.7" y="173.3" textLength="39" lengthAdjust="spacingAndGlyphs">1.50 mm</text>
<text x="233.5" y="189.3" textLength="99.8" lengthAdjust="spacingAndGlyphs">Variation d'épaisseur</text>
<text x="373.7" y="189.3" textLength="45.3" lengthAdjust="spacingAndGlyphs">0.225 mm</text>
<text x="233.5" y="205.4" textLength="87" lengthAdjust="spacingAndGlyphs">Angle de dépouille</text>
<text x="373.7" y="205.4" textLength="35.2" lengthAdjust="spacingAndGlyphs">2.0 deg</text>
<text x="233.5" y="221.4" textLength="130.4" lengthAdjust="spacingAndGlyphs">Angle de dépouille minimum</text>
<text x="373.7" y="221.4" textLength="35.2" lengthAdjust="spacingAndGlyphs">0.5 deg</text>
<text x="233.5" y="237.4" textLength="69.5" lengthAdjust="spacingAndGlyphs">Rayon nominal</text>
<text x="373.7" y="237.4" textLength="39" lengthAdjust="spacingAndGlyphs">0.75 mm</text>
<text x="233.5" y="253.5" textLength="86.4" lengthAdjust="spacingAndGlyphs">Seuil du tranchant</text>
<text x="373.7" y="253.5" textLength="39" lengthAdjust="spacingAndGlyphs">1.00 mm</text>
<text x="213.3" y="269.7" class="b" textLength="111.3" lengthAdjust="spacingAndGlyphs">Nylon (PA6) (2,5 mm)</text>
<text x="213.3" y="286.7" class="b" textLength="145.5" lengthAdjust="spacingAndGlyphs">Polypropylène (PP) (3 mm)</text>
<text x="213.3" y="303.7" class="b" textLength="64.3" lengthAdjust="spacingAndGlyphs">ABS (0,1 po)</text>
<text x="213.3" y="320.7" class="b" textLength="103.3" lengthAdjust="spacingAndGlyphs">Nylon (PA6) (0,1 po)</text>
<text x="213.3" y="337.7" class="b" textLength="146" lengthAdjust="spacingAndGlyphs">Polypropylène (PP) (0,1 po)</text>
</svg>
</div>
</body></html>
